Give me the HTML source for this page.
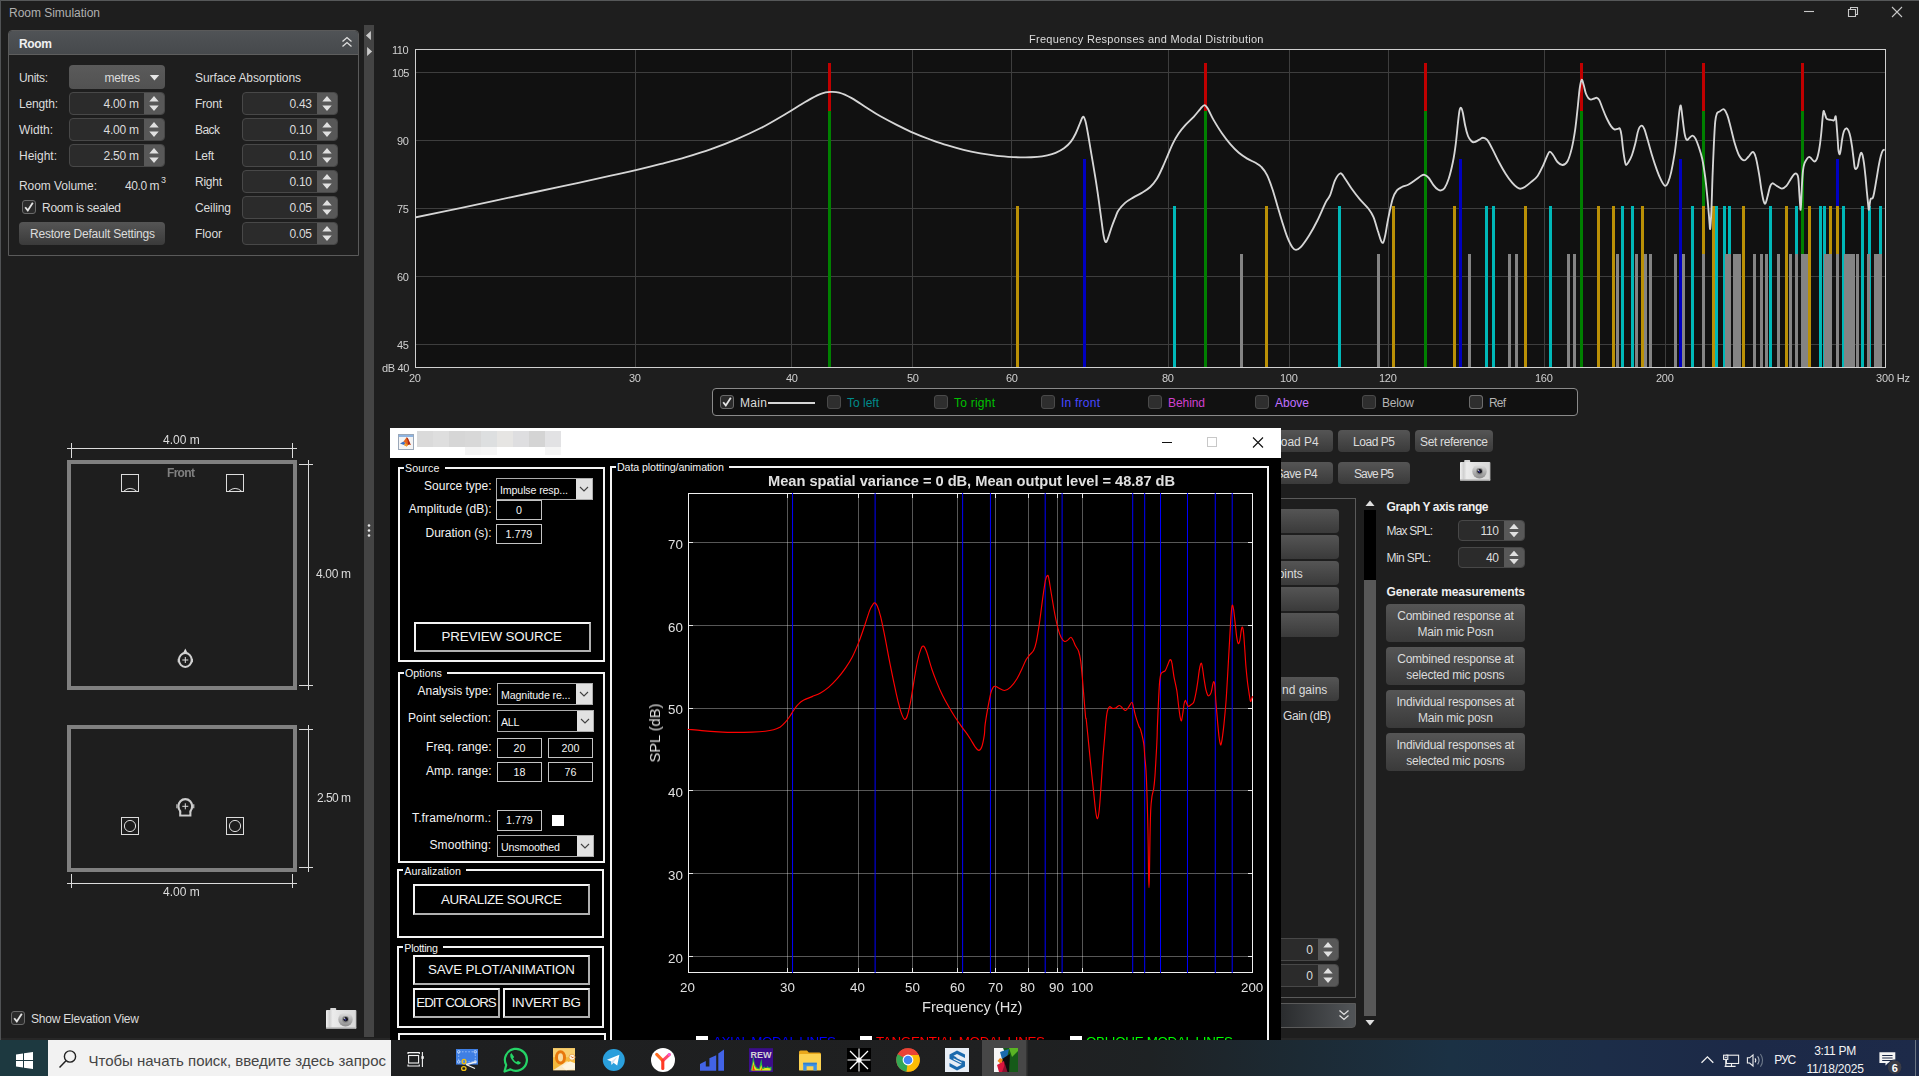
<!DOCTYPE html><html><head><meta charset="utf-8"><title>Room Simulation</title><style>html,body{margin:0;padding:0;background:#1e1e1e;overflow:hidden;}body{width:1919px;height:1076px;position:relative;font-family:"Liberation Sans",sans-serif;}.b{position:absolute;display:block;}.t{position:absolute;white-space:nowrap;display:block;}</style></head><body>
<div class="b" style="left:0px;top:0px;width:1919px;height:1px;background:#565859;"></div>
<div class="b" style="left:0px;top:0px;width:1px;height:1040px;background:#505254;"></div>
<div class="b" style="left:1px;top:1038px;width:1918px;height:2px;background:#272727;"></div>
<span class="t" style="left:9.0px;top:6.3px;font-size:12px;line-height:15px;color:#b0b0b0;letter-spacing:-0.027px;">Room Simulation</span>
<svg class="b" style="left:1795px;top:0px" width="124" height="26"><path d="M9 11.5 H19" stroke="#c8c8c8" stroke-width="1.1"/><path d="M53.5 9.5 h7 v7 h-7 z M55.5 9.5 v-2 h7 v7 h-2" fill="none" stroke="#c8c8c8" stroke-width="1.1"/><path d="M97 7 L107 17 M107 7 L97 17" stroke="#c8c8c8" stroke-width="1.1"/></svg>
<div class="b" style="left:8px;top:30px;width:351px;height:226px;border:1px solid #5a5a5a;box-sizing:border-box;border-radius:4px 4px 0 0;"></div>
<div class="b" style="left:9px;top:31px;width:349px;height:23px;background:linear-gradient(#505356,#46494c);border-radius:3px 3px 0 0;"></div>
<div class="b" style="left:9px;top:54px;width:349px;height:1px;background:#5e5e5e;"></div>
<span class="t" style="left:19.0px;top:36.6px;font-size:12px;line-height:15px;color:#f0f0f0;font-weight:700;letter-spacing:-0.332px;">Room</span>
<svg class="b" style="left:340px;top:35px" width="14" height="14"><path d="M2.5 6.5 L7 2.5 L11.5 6.5 M2.5 11.5 L7 7.5 L11.5 11.5" fill="none" stroke="#e0e0e0" stroke-width="1.3"/></svg>
<span class="t" style="left:19.0px;top:70.7px;font-size:12px;line-height:15px;color:#dcdcdc;letter-spacing:-0.335px;">Units:</span>
<div class="b" style="left:69px;top:65px;width:96px;height:24px;background:linear-gradient(#5a5a5a,#525252);border-radius:4px;"></div>
<span class="t" style="left:104.6px;top:70.7px;font-size:12px;line-height:15px;color:#dcdcdc;letter-spacing:-0.255px;">metres</span>
<svg class="b" style="left:148px;top:73px" width="12" height="9"><path d="M1.8 2 H11.2 L6.5 7.4 Z" fill="#e6e6e6"/></svg>
<span class="t" style="left:19.0px;top:96.7px;font-size:12px;line-height:15px;color:#dcdcdc;letter-spacing:-0.173px;">Length:</span>
<div class="b" style="left:69px;top:92px;width:96px;height:23px;background:#2b2b2b;border:1px solid #484848;border-radius:4px;box-sizing:border-box;"></div>
<div class="b" style="left:144px;top:93px;width:20px;height:21px;background:#585858;border-radius:0 3px 3px 0;"></div>
<svg class="b" style="left:144px;top:92px" width="21" height="23"><path d="M5.3 9.5 L10.0 4.0 L14.7 9.5 Z M5.3 13.5 L10.0 19.0 L14.7 13.5 Z" fill="#e0e0e0"/></svg>
<span class="t" style="left:103.6px;top:97.2px;font-size:12px;line-height:15px;color:#dcdcdc;letter-spacing:-0.250px;">4.00 m</span>
<span class="t" style="left:19.0px;top:122.7px;font-size:12px;line-height:15px;color:#dcdcdc;letter-spacing:-0.002px;">Width:</span>
<div class="b" style="left:69px;top:118px;width:96px;height:23px;background:#2b2b2b;border:1px solid #484848;border-radius:4px;box-sizing:border-box;"></div>
<div class="b" style="left:144px;top:119px;width:20px;height:21px;background:#585858;border-radius:0 3px 3px 0;"></div>
<svg class="b" style="left:144px;top:118px" width="21" height="23"><path d="M5.3 9.5 L10.0 4.0 L14.7 9.5 Z M5.3 13.5 L10.0 19.0 L14.7 13.5 Z" fill="#e0e0e0"/></svg>
<span class="t" style="left:103.6px;top:123.2px;font-size:12px;line-height:15px;color:#dcdcdc;letter-spacing:-0.250px;">4.00 m</span>
<span class="t" style="left:19.0px;top:148.7px;font-size:12px;line-height:15px;color:#dcdcdc;letter-spacing:-0.004px;">Height:</span>
<div class="b" style="left:69px;top:144px;width:96px;height:23px;background:#2b2b2b;border:1px solid #484848;border-radius:4px;box-sizing:border-box;"></div>
<div class="b" style="left:144px;top:145px;width:20px;height:21px;background:#585858;border-radius:0 3px 3px 0;"></div>
<svg class="b" style="left:144px;top:144px" width="21" height="23"><path d="M5.3 9.5 L10.0 4.0 L14.7 9.5 Z M5.3 13.5 L10.0 19.0 L14.7 13.5 Z" fill="#e0e0e0"/></svg>
<span class="t" style="left:103.6px;top:149.2px;font-size:12px;line-height:15px;color:#dcdcdc;letter-spacing:-0.250px;">2.50 m</span>
<span class="t" style="left:195.0px;top:70.7px;font-size:12px;line-height:15px;color:#dcdcdc;letter-spacing:-0.078px;">Surface Absorptions</span>
<span class="t" style="left:195.0px;top:96.7px;font-size:12px;line-height:15px;color:#dcdcdc;letter-spacing:-0.252px;">Front</span>
<div class="b" style="left:242px;top:92px;width:96px;height:23px;background:#2b2b2b;border:1px solid #484848;border-radius:4px;box-sizing:border-box;"></div>
<div class="b" style="left:317px;top:93px;width:20px;height:21px;background:#585858;border-radius:0 3px 3px 0;"></div>
<svg class="b" style="left:317px;top:92px" width="21" height="23"><path d="M5.3 9.5 L10.0 4.0 L14.7 9.5 Z M5.3 13.5 L10.0 19.0 L14.7 13.5 Z" fill="#e0e0e0"/></svg>
<span class="t" style="left:289.4px;top:97.2px;font-size:12px;line-height:15px;color:#dcdcdc;letter-spacing:-0.250px;">0.43</span>
<span class="t" style="left:195.0px;top:122.7px;font-size:12px;line-height:15px;color:#dcdcdc;letter-spacing:-0.559px;">Back</span>
<div class="b" style="left:242px;top:118px;width:96px;height:23px;background:#2b2b2b;border:1px solid #484848;border-radius:4px;box-sizing:border-box;"></div>
<div class="b" style="left:317px;top:119px;width:20px;height:21px;background:#585858;border-radius:0 3px 3px 0;"></div>
<svg class="b" style="left:317px;top:118px" width="21" height="23"><path d="M5.3 9.5 L10.0 4.0 L14.7 9.5 Z M5.3 13.5 L10.0 19.0 L14.7 13.5 Z" fill="#e0e0e0"/></svg>
<span class="t" style="left:289.4px;top:123.2px;font-size:12px;line-height:15px;color:#dcdcdc;letter-spacing:-0.250px;">0.10</span>
<span class="t" style="left:195.0px;top:148.7px;font-size:12px;line-height:15px;color:#dcdcdc;letter-spacing:-0.339px;">Left</span>
<div class="b" style="left:242px;top:144px;width:96px;height:23px;background:#2b2b2b;border:1px solid #484848;border-radius:4px;box-sizing:border-box;"></div>
<div class="b" style="left:317px;top:145px;width:20px;height:21px;background:#585858;border-radius:0 3px 3px 0;"></div>
<svg class="b" style="left:317px;top:144px" width="21" height="23"><path d="M5.3 9.5 L10.0 4.0 L14.7 9.5 Z M5.3 13.5 L10.0 19.0 L14.7 13.5 Z" fill="#e0e0e0"/></svg>
<span class="t" style="left:289.4px;top:149.2px;font-size:12px;line-height:15px;color:#dcdcdc;letter-spacing:-0.250px;">0.10</span>
<span class="t" style="left:195.0px;top:174.7px;font-size:12px;line-height:15px;color:#dcdcdc;letter-spacing:-0.253px;">Right</span>
<div class="b" style="left:242px;top:170px;width:96px;height:23px;background:#2b2b2b;border:1px solid #484848;border-radius:4px;box-sizing:border-box;"></div>
<div class="b" style="left:317px;top:171px;width:20px;height:21px;background:#585858;border-radius:0 3px 3px 0;"></div>
<svg class="b" style="left:317px;top:170px" width="21" height="23"><path d="M5.3 9.5 L10.0 4.0 L14.7 9.5 Z M5.3 13.5 L10.0 19.0 L14.7 13.5 Z" fill="#e0e0e0"/></svg>
<span class="t" style="left:289.4px;top:175.2px;font-size:12px;line-height:15px;color:#dcdcdc;letter-spacing:-0.250px;">0.10</span>
<span class="t" style="left:195.0px;top:200.7px;font-size:12px;line-height:15px;color:#dcdcdc;letter-spacing:-0.114px;">Ceiling</span>
<div class="b" style="left:242px;top:196px;width:96px;height:23px;background:#2b2b2b;border:1px solid #484848;border-radius:4px;box-sizing:border-box;"></div>
<div class="b" style="left:317px;top:197px;width:20px;height:21px;background:#585858;border-radius:0 3px 3px 0;"></div>
<svg class="b" style="left:317px;top:196px" width="21" height="23"><path d="M5.3 9.5 L10.0 4.0 L14.7 9.5 Z M5.3 13.5 L10.0 19.0 L14.7 13.5 Z" fill="#e0e0e0"/></svg>
<span class="t" style="left:289.4px;top:201.2px;font-size:12px;line-height:15px;color:#dcdcdc;letter-spacing:-0.250px;">0.05</span>
<span class="t" style="left:195.0px;top:226.7px;font-size:12px;line-height:15px;color:#dcdcdc;letter-spacing:-0.085px;">Floor</span>
<div class="b" style="left:242px;top:222px;width:96px;height:23px;background:#2b2b2b;border:1px solid #484848;border-radius:4px;box-sizing:border-box;"></div>
<div class="b" style="left:317px;top:223px;width:20px;height:21px;background:#585858;border-radius:0 3px 3px 0;"></div>
<svg class="b" style="left:317px;top:222px" width="21" height="23"><path d="M5.3 9.5 L10.0 4.0 L14.7 9.5 Z M5.3 13.5 L10.0 19.0 L14.7 13.5 Z" fill="#e0e0e0"/></svg>
<span class="t" style="left:289.4px;top:227.2px;font-size:12px;line-height:15px;color:#dcdcdc;letter-spacing:-0.250px;">0.05</span>
<span class="t" style="left:19.0px;top:179.3px;font-size:12px;line-height:15px;color:#dcdcdc;letter-spacing:-0.064px;">Room Volume:</span>
<span class="t" style="left:125.0px;top:179.3px;font-size:12px;line-height:15px;color:#dcdcdc;letter-spacing:-0.417px;">40.0 m</span>
<span class="t" style="left:161.0px;top:174.7px;font-size:9px;line-height:11px;color:#dcdcdc;letter-spacing:-1.505px;">3</span>
<div class="b" style="left:22px;top:200px;width:14px;height:14px;background:#2b2b2b;border:1px solid #6a6a6a;border-radius:3px;box-sizing:border-box;"></div>
<svg class="b" style="left:22px;top:200px" width="14" height="14"><path d="M3.2 7.2 L5.8 10.4 L10.8 2.8" fill="none" stroke="#e6e6e6" stroke-width="1.8"/></svg>
<span class="t" style="left:42.0px;top:200.7px;font-size:12px;line-height:15px;color:#dcdcdc;letter-spacing:-0.285px;">Room is sealed</span>
<div class="b" style="left:19px;top:222px;width:146px;height:23px;background:linear-gradient(#555555,#3a3a3a);border-radius:4px;"></div>
<span class="t" style="left:30.0px;top:226.9px;font-size:12px;line-height:15px;color:#dcdcdc;letter-spacing:-0.220px;">Restore Default Settings</span>
<div class="b" style="left:364px;top:25px;width:10px;height:1012px;background:#444444;"></div>
<svg class="b" style="left:364px;top:28px" width="10" height="30"><path d="M6.9 3 V12 L1.9 7.5 Z M3.1 19 V28 L8.1 23.5 Z" fill="#cacaca"/></svg>
<svg class="b" style="left:366px;top:522px" width="6" height="18"><circle cx="3" cy="3.5" r="1.3" fill="#e8e8e8"/><circle cx="3" cy="8.5" r="1.3" fill="#e8e8e8"/><circle cx="3" cy="13.5" r="1.3" fill="#e8e8e8"/></svg>
<div class="b" style="left:11px;top:1011px;width:14px;height:14px;background:#2b2b2b;border:1px solid #6a6a6a;border-radius:3px;box-sizing:border-box;"></div>
<svg class="b" style="left:11px;top:1011px" width="14" height="14"><path d="M3.2 7.2 L5.8 10.4 L10.8 2.8" fill="none" stroke="#e6e6e6" stroke-width="1.8"/></svg>
<span class="t" style="left:31.0px;top:1011.9px;font-size:12px;line-height:15px;color:#dcdcdc;letter-spacing:-0.214px;">Show Elevation View</span>
<svg class="b" style="left:326px;top:1008px" width="31" height="22" viewBox="0 0 31 22"><defs><linearGradient id="cg1" x1="0" x2="1"><stop offset="0" stop-color="#f0f0f0"/><stop offset="0.12" stop-color="#d0d0d0"/><stop offset="0.22" stop-color="#ececec"/><stop offset="0.5" stop-color="#e2e2e2"/><stop offset="1" stop-color="#d8d8d8"/></linearGradient><linearGradient id="cl1" x1="0" y1="0" x2="0" y2="1"><stop offset="0" stop-color="#e4e4e4"/><stop offset="0.5" stop-color="#b4b4b4"/><stop offset="1" stop-color="#8c8c8c"/></linearGradient></defs><rect x="4.2" y="0" width="6" height="2.6" rx="0.8" fill="#d8d8d8"/><rect x="0" y="2" width="30.2" height="18.6" rx="0.8" fill="url(#cg1)"/><rect x="0" y="19.2" width="30.2" height="1.4" fill="#bcbcbc"/><rect x="29.2" y="2.500" width="1" height="18" fill="#c8c8c8"/><circle cx="19.5" cy="11.4" r="7.2" fill="url(#cl1)"/><circle cx="19.5" cy="11.4" r="3.4" fill="#8a8a8a"/><circle cx="19.7" cy="11.3" r="2.3" fill="#14141c"/><circle cx="19.3" cy="11.600" r="0.9" fill="#3a3aa0"/><circle cx="18.6" cy="10.300" r="0.7" fill="#d0d0d0"/></svg>
<svg class="b" style="left:0px;top:420px" width="364" height="490" shape-rendering="crispEdges"><rect x="69" y="42" width="226" height="226" fill="none" stroke="#808080" stroke-width="4"/><path d="M67 28.5 H297 M71.5 23 V38 M292.5 23 V38" stroke="#dcdcdc" stroke-width="1"/><path d="M308.5 40 V270 M299 44.5 H313 M299 265.5 H313" stroke="#dcdcdc" stroke-width="1"/><rect x="69" y="307" width="226" height="143" fill="none" stroke="#808080" stroke-width="4"/><path d="M308.5 305 V452 M299 309.5 H313 M299 447.5 H313" stroke="#dcdcdc" stroke-width="1"/><path d="M67 463.5 H297 M71.5 454 V468 M292.5 454 V468" stroke="#dcdcdc" stroke-width="1"/><rect x="121.5" y="54.5" width="17" height="17" fill="none" stroke="#dcdcdc" stroke-width="1"/><rect x="226.5" y="54.5" width="17" height="17" fill="none" stroke="#dcdcdc" stroke-width="1"/><rect x="121.5" y="397.5" width="17" height="17" fill="none" stroke="#dcdcdc" stroke-width="1"/><rect x="226.5" y="397.5" width="17" height="17" fill="none" stroke="#dcdcdc" stroke-width="1"/></svg>
<svg class="b" style="left:0px;top:420px" width="364" height="490"><path d="M124 71 Q130 65.80000000000001 136.5 71" fill="none" stroke="#dcdcdc" stroke-width="1"/><circle cx="130" cy="406" r="5.6" fill="none" stroke="#dcdcdc" stroke-width="1"/><path d="M229 71 Q235 65.80000000000001 241.5 71" fill="none" stroke="#dcdcdc" stroke-width="1"/><circle cx="235" cy="406" r="5.6" fill="none" stroke="#dcdcdc" stroke-width="1"/><path d="M185.3 228.5 L187.9 233.7 L182.70000000000002 233.7 Z" fill="#dcdcdc"/><path d="M177.70000000000002 238.8 h1.2 v3.4 h-1.2 z M191.70000000000002 238.8 h1.2 v3.4 h-1.2 z" fill="#dcdcdc"/><ellipse cx="185.3" cy="240" rx="6.4" ry="6.9" fill="none" stroke="#d0d0d0" stroke-width="2"/><path d="M182.3 240 H188.3 M185.3 237 V243" stroke="#dcdcdc" stroke-width="1"/><path d="M180.3 390.29999999999995 V395.29999999999995 H190.3 V390.29999999999995" fill="none" stroke="#cccccc" stroke-width="2.2"/><ellipse cx="185.3" cy="386.29999999999995" rx="6.9" ry="7.2" fill="#1e1e1e" stroke="#cccccc" stroke-width="2.2"/><rect x="181.3" y="390.49999999999994" width="8" height="4" fill="#1e1e1e"/><path d="M176.9 384.29999999999995 v4 M193.70000000000002 384.29999999999995 v4" stroke="#b0b0b0" stroke-width="1.4"/><path d="M182.3 386.29999999999995 H188.3 M185.3 383.29999999999995 V389.29999999999995" stroke="#dcdcdc" stroke-width="1"/></svg>
<span class="t" style="left:163.0px;top:432.7px;font-size:12px;line-height:15px;color:#dcdcdc;letter-spacing:0.000px;will-change:transform;">4.00 m</span>
<span class="t" style="left:316.0px;top:566.7px;font-size:12px;line-height:15px;color:#dcdcdc;letter-spacing:-0.337px;will-change:transform;">4.00 m</span>
<span class="t" style="left:167.3px;top:465.6px;font-size:12px;line-height:15px;color:#808080;font-weight:700;letter-spacing:-0.689px;will-change:transform;">Front</span>
<span class="t" style="left:316.5px;top:790.5px;font-size:12px;line-height:15px;color:#dcdcdc;letter-spacing:-0.537px;will-change:transform;">2.50 m</span>
<span class="t" style="left:163.0px;top:884.5px;font-size:12px;line-height:15px;color:#dcdcdc;letter-spacing:0.000px;will-change:transform;">4.00 m</span>
<svg class="b" style="left:376px;top:30px" width="1543" height="370" shape-rendering="crispEdges"><rect x="39" y="19" width="1471" height="319" fill="#111111"/><path d="M259.5 20 V337M415.5 20 V337M536.5 20 V337M635.5 20 V337M792.5 20 V337M913.5 20 V337M1012.5 20 V337M1168.5 20 V337M1289.5 20 V337M40 42.5 H1509M40 110.5 H1509M40 178.5 H1509M40 246.5 H1509M40 314.5 H1509" stroke="#3e3e3e" stroke-width="1"/><rect x="452" y="33" width="3" height="304" fill="#c00000"/><rect x="828" y="33" width="3" height="304" fill="#c00000"/><rect x="1048" y="33" width="3" height="304" fill="#c00000"/><rect x="1204" y="33" width="3" height="304" fill="#c00000"/><rect x="1326" y="33" width="3" height="304" fill="#c00000"/><rect x="1425" y="33" width="3" height="304" fill="#c00000"/><rect x="452" y="81" width="3" height="256" fill="#008000"/><rect x="828" y="81" width="3" height="256" fill="#008000"/><rect x="1048" y="81" width="3" height="256" fill="#008000"/><rect x="1204" y="81" width="3" height="256" fill="#008000"/><rect x="1326" y="81" width="3" height="256" fill="#008000"/><rect x="1425" y="81" width="3" height="256" fill="#008000"/><rect x="707" y="129" width="3" height="208" fill="#0000c0"/><rect x="1083" y="129" width="3" height="208" fill="#0000c0"/><rect x="1303" y="129" width="3" height="208" fill="#0000c0"/><rect x="1460" y="129" width="3" height="208" fill="#0000c0"/><rect x="640" y="176" width="3" height="161" fill="#ba9006"/><rect x="889" y="176" width="3" height="161" fill="#ba9006"/><rect x="889" y="176" width="3" height="161" fill="#ba9006"/><rect x="1016" y="176" width="3" height="161" fill="#ba9006"/><rect x="1077" y="176" width="3" height="161" fill="#ba9006"/><rect x="1077" y="176" width="3" height="161" fill="#ba9006"/><rect x="1148" y="176" width="3" height="161" fill="#ba9006"/><rect x="1148" y="176" width="3" height="161" fill="#ba9006"/><rect x="1221" y="176" width="3" height="161" fill="#ba9006"/><rect x="1221" y="176" width="3" height="161" fill="#ba9006"/><rect x="1236" y="176" width="3" height="161" fill="#ba9006"/><rect x="1265" y="176" width="3" height="161" fill="#ba9006"/><rect x="1265" y="176" width="3" height="161" fill="#ba9006"/><rect x="1326" y="176" width="3" height="161" fill="#ba9006"/><rect x="1326" y="176" width="3" height="161" fill="#ba9006"/><rect x="1336" y="176" width="3" height="161" fill="#ba9006"/><rect x="1336" y="176" width="3" height="161" fill="#ba9006"/><rect x="1366" y="176" width="3" height="161" fill="#ba9006"/><rect x="1366" y="176" width="3" height="161" fill="#ba9006"/><rect x="1393" y="176" width="3" height="161" fill="#ba9006"/><rect x="1409" y="176" width="3" height="161" fill="#ba9006"/><rect x="1409" y="176" width="3" height="161" fill="#ba9006"/><rect x="1432" y="176" width="3" height="161" fill="#ba9006"/><rect x="1432" y="176" width="3" height="161" fill="#ba9006"/><rect x="1453" y="176" width="3" height="161" fill="#ba9006"/><rect x="1453" y="176" width="3" height="161" fill="#ba9006"/><rect x="1460" y="176" width="3" height="161" fill="#ba9006"/><rect x="1460" y="176" width="3" height="161" fill="#ba9006"/><rect x="1485" y="176" width="3" height="161" fill="#ba9006"/><rect x="1485" y="176" width="3" height="161" fill="#ba9006"/><rect x="797" y="176" width="3" height="161" fill="#00b8b8"/><rect x="797" y="176" width="3" height="161" fill="#00b8b8"/><rect x="962" y="176" width="3" height="161" fill="#00b8b8"/><rect x="962" y="176" width="3" height="161" fill="#00b8b8"/><rect x="1109" y="176" width="3" height="161" fill="#00b8b8"/><rect x="1109" y="176" width="3" height="161" fill="#00b8b8"/><rect x="1116" y="176" width="3" height="161" fill="#00b8b8"/><rect x="1116" y="176" width="3" height="161" fill="#00b8b8"/><rect x="1173" y="176" width="3" height="161" fill="#00b8b8"/><rect x="1173" y="176" width="3" height="161" fill="#00b8b8"/><rect x="1245" y="176" width="3" height="161" fill="#00b8b8"/><rect x="1245" y="176" width="3" height="161" fill="#00b8b8"/><rect x="1255" y="176" width="3" height="161" fill="#00b8b8"/><rect x="1255" y="176" width="3" height="161" fill="#00b8b8"/><rect x="1315" y="176" width="3" height="161" fill="#00b8b8"/><rect x="1315" y="176" width="3" height="161" fill="#00b8b8"/><rect x="1339" y="176" width="3" height="161" fill="#00b8b8"/><rect x="1339" y="176" width="3" height="161" fill="#00b8b8"/><rect x="1347" y="176" width="3" height="161" fill="#00b8b8"/><rect x="1347" y="176" width="3" height="161" fill="#00b8b8"/><rect x="1352" y="176" width="3" height="161" fill="#00b8b8"/><rect x="1352" y="176" width="3" height="161" fill="#00b8b8"/><rect x="1393" y="176" width="3" height="161" fill="#00b8b8"/><rect x="1393" y="176" width="3" height="161" fill="#00b8b8"/><rect x="1419" y="176" width="3" height="161" fill="#00b8b8"/><rect x="1419" y="176" width="3" height="161" fill="#00b8b8"/><rect x="1443" y="176" width="3" height="161" fill="#00b8b8"/><rect x="1443" y="176" width="3" height="161" fill="#00b8b8"/><rect x="1447" y="176" width="3" height="161" fill="#00b8b8"/><rect x="1447" y="176" width="3" height="161" fill="#00b8b8"/><rect x="1466" y="176" width="3" height="161" fill="#00b8b8"/><rect x="1466" y="176" width="3" height="161" fill="#00b8b8"/><rect x="1485" y="176" width="3" height="161" fill="#00b8b8"/><rect x="1485" y="176" width="3" height="161" fill="#00b8b8"/><rect x="1492" y="176" width="3" height="161" fill="#00b8b8"/><rect x="1492" y="176" width="3" height="161" fill="#00b8b8"/><rect x="1503" y="176" width="3" height="161" fill="#00b8b8"/><rect x="1503" y="176" width="3" height="161" fill="#00b8b8"/><rect x="864" y="224" width="3" height="113" fill="#848484"/><rect x="1001" y="224" width="3" height="113" fill="#848484"/><rect x="1001" y="224" width="3" height="113" fill="#848484"/><rect x="1092" y="224" width="3" height="113" fill="#848484"/><rect x="1132" y="224" width="3" height="113" fill="#848484"/><rect x="1139" y="224" width="3" height="113" fill="#848484"/><rect x="1139" y="224" width="3" height="113" fill="#848484"/><rect x="1191" y="224" width="3" height="113" fill="#848484"/><rect x="1191" y="224" width="3" height="113" fill="#848484"/><rect x="1197" y="224" width="3" height="113" fill="#848484"/><rect x="1197" y="224" width="3" height="113" fill="#848484"/><rect x="1240" y="224" width="3" height="113" fill="#848484"/><rect x="1259" y="224" width="3" height="113" fill="#848484"/><rect x="1259" y="224" width="3" height="113" fill="#848484"/><rect x="1268" y="224" width="3" height="113" fill="#848484"/><rect x="1268" y="224" width="3" height="113" fill="#848484"/><rect x="1273" y="224" width="3" height="113" fill="#848484"/><rect x="1298" y="224" width="3" height="113" fill="#848484"/><rect x="1298" y="224" width="3" height="113" fill="#848484"/><rect x="1306" y="224" width="3" height="113" fill="#848484"/><rect x="1306" y="224" width="3" height="113" fill="#848484"/><rect x="1326" y="224" width="3" height="113" fill="#848484"/><rect x="1349" y="224" width="3" height="113" fill="#848484"/><rect x="1349" y="224" width="3" height="113" fill="#848484"/><rect x="1352" y="224" width="3" height="113" fill="#848484"/><rect x="1352" y="224" width="3" height="113" fill="#848484"/><rect x="1357" y="224" width="3" height="113" fill="#848484"/><rect x="1357" y="224" width="3" height="113" fill="#848484"/><rect x="1359" y="224" width="3" height="113" fill="#848484"/><rect x="1362" y="224" width="3" height="113" fill="#848484"/><rect x="1362" y="224" width="3" height="113" fill="#848484"/><rect x="1377" y="224" width="3" height="113" fill="#848484"/><rect x="1377" y="224" width="3" height="113" fill="#848484"/><rect x="1384" y="224" width="3" height="113" fill="#848484"/><rect x="1389" y="224" width="3" height="113" fill="#848484"/><rect x="1389" y="224" width="3" height="113" fill="#848484"/><rect x="1401" y="224" width="3" height="113" fill="#848484"/><rect x="1401" y="224" width="3" height="113" fill="#848484"/><rect x="1413" y="224" width="3" height="113" fill="#848484"/><rect x="1419" y="224" width="3" height="113" fill="#848484"/><rect x="1419" y="224" width="3" height="113" fill="#848484"/><rect x="1425" y="224" width="3" height="113" fill="#848484"/><rect x="1425" y="224" width="3" height="113" fill="#848484"/><rect x="1426" y="224" width="3" height="113" fill="#848484"/><rect x="1426" y="224" width="3" height="113" fill="#848484"/><rect x="1429" y="224" width="3" height="113" fill="#848484"/><rect x="1429" y="224" width="3" height="113" fill="#848484"/><rect x="1448" y="224" width="3" height="113" fill="#848484"/><rect x="1448" y="224" width="3" height="113" fill="#848484"/><rect x="1450" y="224" width="3" height="113" fill="#848484"/><rect x="1450" y="224" width="3" height="113" fill="#848484"/><rect x="1453" y="224" width="3" height="113" fill="#848484"/><rect x="1453" y="224" width="3" height="113" fill="#848484"/><rect x="1460" y="224" width="3" height="113" fill="#848484"/><rect x="1468" y="224" width="3" height="113" fill="#848484"/><rect x="1470" y="224" width="3" height="113" fill="#848484"/><rect x="1470" y="224" width="3" height="113" fill="#848484"/><rect x="1473" y="224" width="3" height="113" fill="#848484"/><rect x="1473" y="224" width="3" height="113" fill="#848484"/><rect x="1473" y="224" width="3" height="113" fill="#848484"/><rect x="1476" y="224" width="3" height="113" fill="#848484"/><rect x="1476" y="224" width="3" height="113" fill="#848484"/><rect x="1480" y="224" width="3" height="113" fill="#848484"/><rect x="1480" y="224" width="3" height="113" fill="#848484"/><rect x="1491" y="224" width="3" height="113" fill="#848484"/><rect x="1491" y="224" width="3" height="113" fill="#848484"/><rect x="1498" y="224" width="3" height="113" fill="#848484"/><rect x="1498" y="224" width="3" height="113" fill="#848484"/><rect x="1500" y="224" width="3" height="113" fill="#848484"/><rect x="1500" y="224" width="3" height="113" fill="#848484"/><rect x="1503" y="224" width="3" height="113" fill="#848484"/><rect x="1503" y="224" width="3" height="113" fill="#848484"/><rect x="39.5" y="19.5" width="1470" height="318" fill="none" stroke="#d0d0d0" stroke-width="1"/></svg>
<svg class="b" style="left:376px;top:30px" width="1543" height="370"><clipPath id="tc"><rect x="40" y="20" width="1469" height="317"/></clipPath><path clip-path="url(#tc)" d="M39.5 187.3C46.9 185.8 68.4 181.4 84.2 178.1C100.0 174.8 117.7 170.9 134.4 167.3C151.1 163.7 167.9 160.3 184.6 156.7C201.3 153.1 222.3 148.4 234.8 145.7C247.3 142.9 251.4 142.2 259.8 140.2C268.1 138.2 276.5 136.1 284.9 133.9C293.3 131.7 301.6 129.6 310.0 127.1C318.4 124.6 326.7 122.1 335.1 119.1C343.5 116.1 351.8 112.9 360.2 109.3C368.6 105.8 376.9 102.1 385.3 97.8C393.7 93.5 403.7 87.4 410.4 83.5C417.1 79.6 421.3 76.7 425.5 74.2C429.7 71.7 432.2 70.2 435.5 68.4C438.8 66.6 442.4 64.7 445.5 63.6C448.6 62.5 451.4 62.1 454.3 61.9C457.2 61.7 459.5 61.6 463.1 62.6C466.7 63.6 471.1 65.6 475.7 68.1C480.3 70.6 486.0 74.7 490.7 77.7C495.4 80.7 499.0 83.2 504.0 86.0C509.0 88.8 515.1 92.0 520.7 94.8C526.3 97.6 531.8 100.5 537.4 102.9C543.0 105.4 548.6 107.5 554.2 109.5C559.8 111.5 565.3 113.5 570.9 115.2C576.5 116.9 582.0 118.5 587.6 119.9C593.2 121.3 598.8 122.4 604.4 123.4C610.0 124.4 615.5 125.2 621.1 125.8C626.7 126.4 633.1 126.8 637.8 127.1C642.5 127.4 645.6 127.4 649.5 127.4C653.4 127.4 657.6 127.2 661.2 126.9C664.8 126.6 668.2 126.0 671.3 125.3C674.4 124.6 676.8 124.0 679.6 122.8C682.4 121.6 685.5 120.0 688.0 118.2C690.5 116.4 692.8 114.4 694.7 111.9C696.7 109.5 698.2 106.6 699.7 103.5C701.2 100.4 702.7 96.3 703.9 93.5C705.1 90.7 706.0 87.2 706.9 86.8C707.8 86.4 708.5 87.9 709.4 91.0C710.3 94.1 711.2 99.5 712.2 105.2C713.2 110.9 714.3 117.8 715.6 125.3C716.9 132.8 718.4 141.5 719.8 150.4C721.2 159.3 722.7 169.9 723.9 178.8C725.2 187.7 726.4 198.4 727.3 203.9C728.2 209.4 728.8 211.1 729.5 211.9C730.2 212.7 730.8 211.4 731.8 208.9C732.8 206.4 734.3 201.0 735.6 197.2C736.9 193.4 738.7 189.1 739.8 186.3C740.9 183.5 740.9 182.7 742.4 180.5C744.0 178.3 746.6 175.1 749.1 172.9C751.6 170.7 754.7 169.1 757.5 167.4C760.3 165.7 763.0 164.6 765.8 162.9C768.6 161.2 771.7 159.4 774.2 157.0C776.7 154.6 778.8 152.0 780.9 148.7C783.0 145.4 784.9 140.9 786.7 137.0C788.5 133.1 790.0 129.2 791.7 125.3C793.4 121.4 795.0 117.2 796.8 113.6C798.6 110.0 800.5 106.6 802.6 103.5C804.7 100.4 806.8 98.0 809.3 95.2C811.8 92.4 815.2 89.5 817.7 86.8C820.2 84.1 822.6 80.8 824.4 78.8C826.2 76.8 827.2 75.1 828.5 75.1C829.8 75.1 830.4 76.3 831.9 78.8C833.4 81.3 835.3 86.0 837.7 90.1C840.1 94.2 843.3 99.5 846.1 103.5C848.9 107.5 851.7 111.2 854.5 114.4C857.3 117.6 860.0 120.4 862.8 122.8C865.6 125.2 868.4 126.9 871.2 128.6C874.0 130.3 877.1 131.4 879.5 132.8C881.9 134.2 883.5 134.9 885.4 137.0C887.4 139.1 889.4 141.7 891.2 145.3C893.0 148.9 894.6 153.7 896.3 158.7C898.0 163.7 899.6 169.8 901.3 175.4C903.0 181.0 904.6 186.9 906.3 192.2C908.0 197.5 909.6 203.0 911.3 207.2C913.0 211.4 914.8 215.1 916.3 217.2C917.8 219.3 918.6 219.8 920.0 219.8C921.4 219.8 922.5 219.6 924.7 217.2C926.9 214.8 930.3 209.9 933.1 205.5C935.9 201.1 938.6 196.1 941.4 190.5C944.2 184.9 947.7 176.3 949.8 172.1C951.9 167.9 952.5 169.0 954.0 165.4C955.5 161.8 957.3 154.1 959.0 150.4C960.7 146.7 962.7 143.6 964.4 143.3C966.1 143.0 967.2 146.1 969.1 148.7C971.0 151.3 973.2 155.2 975.7 158.7C978.2 162.2 981.3 166.2 984.1 169.6C986.9 172.9 990.3 175.9 992.5 178.8C994.7 181.7 996.0 183.5 997.5 187.1C999.0 190.7 1000.5 196.6 1001.7 200.5C1003.0 204.4 1004.1 208.6 1005.0 210.6C1005.9 212.6 1006.5 213.4 1007.2 212.6C1007.9 211.8 1008.3 209.8 1009.2 205.5C1010.1 201.2 1011.2 193.2 1012.5 187.1C1013.8 181.0 1015.3 173.1 1016.7 168.7C1018.1 164.2 1019.4 162.3 1020.9 160.4C1022.4 158.5 1024.0 158.0 1025.9 157.0C1027.9 156.0 1030.4 155.7 1032.6 154.5C1034.8 153.3 1037.2 151.5 1039.3 150.0C1041.4 148.5 1043.7 146.6 1045.2 145.7C1046.7 144.8 1047.2 144.5 1048.5 144.8C1049.8 145.2 1051.2 146.0 1052.7 147.8C1054.2 149.6 1056.2 153.4 1057.7 155.4C1059.2 157.4 1060.7 158.8 1061.9 159.6C1063.1 160.4 1063.6 160.7 1064.7 160.4C1065.8 160.1 1067.3 159.9 1068.6 157.9C1069.9 155.9 1071.3 153.0 1072.7 148.7C1074.1 144.4 1075.7 137.8 1076.9 132.0C1078.1 126.2 1079.0 120.0 1079.8 113.6C1080.6 107.2 1081.3 99.1 1081.9 93.5C1082.5 87.9 1083.0 82.7 1083.6 80.1C1084.2 77.5 1084.7 77.5 1085.3 78.1C1085.9 78.7 1086.4 80.7 1087.0 83.5C1087.6 86.3 1088.3 91.5 1089.1 95.2C1089.9 99.0 1091.0 103.4 1092.0 106.0C1093.0 108.6 1094.3 110.0 1095.3 111.0C1096.3 112.0 1096.9 112.4 1098.2 112.2C1099.5 112.0 1101.4 110.7 1102.9 109.9C1104.4 109.2 1105.6 107.7 1107.0 107.7C1108.4 107.7 1109.7 108.1 1111.2 109.9C1112.7 111.7 1114.2 114.9 1116.2 118.6C1118.2 122.3 1120.7 127.8 1122.9 132.0C1125.1 136.2 1127.4 140.2 1129.6 143.7C1131.8 147.2 1134.3 150.6 1136.3 152.9C1138.2 155.2 1139.9 156.5 1141.3 157.5C1142.7 158.5 1143.5 158.8 1144.7 158.7C1146.0 158.6 1147.1 158.1 1148.8 157.0C1150.5 155.9 1152.6 154.2 1154.7 152.4C1156.8 150.6 1159.3 149.0 1161.4 146.2C1163.5 143.3 1165.5 138.8 1167.2 135.3C1168.9 131.8 1170.3 127.6 1171.4 125.3C1172.5 123.0 1172.9 121.6 1173.9 121.6C1174.9 121.6 1176.0 123.6 1177.3 125.3C1178.6 127.0 1180.0 130.4 1181.5 132.0C1183.0 133.6 1184.8 135.1 1186.5 135.0C1188.2 134.9 1190.0 133.9 1191.5 131.2C1193.0 128.5 1194.4 123.8 1195.7 118.6C1197.0 113.4 1198.1 106.9 1199.1 100.2C1200.1 93.5 1200.8 85.5 1201.6 78.5C1202.4 71.5 1203.0 63.2 1203.7 58.4C1204.4 53.6 1205.0 50.3 1205.7 49.7C1206.4 49.1 1207.0 52.8 1207.7 55.1C1208.4 57.4 1209.1 61.3 1209.9 63.5C1210.7 65.7 1211.6 67.1 1212.4 68.1C1213.2 69.1 1213.9 69.5 1214.9 69.6C1215.9 69.7 1217.3 68.8 1218.3 68.5C1219.3 68.2 1220.0 67.5 1220.8 67.8C1221.6 68.1 1222.3 68.3 1223.3 70.1C1224.3 71.9 1225.3 75.4 1226.6 78.5C1227.8 81.6 1229.4 85.6 1230.8 88.5C1232.2 91.4 1233.7 94.3 1235.0 96.1C1236.3 97.9 1237.3 98.9 1238.4 99.4C1239.5 99.9 1240.8 99.0 1241.7 98.9C1242.6 98.8 1243.3 97.5 1243.9 98.6C1244.5 99.7 1245.0 101.7 1245.5 105.3C1246.0 108.9 1246.6 116.0 1247.2 120.3C1247.8 124.6 1248.4 128.8 1248.9 131.2C1249.4 133.6 1249.5 134.9 1250.1 135.0C1250.7 135.1 1251.6 133.6 1252.6 132.0C1253.6 130.4 1254.8 128.4 1255.9 125.3C1257.0 122.2 1258.2 117.8 1259.3 113.6C1260.4 109.4 1261.2 103.2 1262.3 100.2C1263.3 97.2 1264.6 95.7 1265.6 95.6C1266.6 95.5 1267.5 97.0 1268.5 99.4C1269.5 101.9 1270.5 106.0 1271.8 110.3C1273.0 114.6 1274.5 120.3 1276.0 125.3C1277.5 130.3 1279.5 136.2 1281.0 140.4C1282.5 144.6 1283.9 147.8 1285.2 150.4C1286.5 153.0 1287.9 155.4 1289.0 155.8C1290.1 156.2 1290.9 155.2 1291.9 152.9C1292.9 150.6 1294.1 147.0 1295.2 142.1C1296.3 137.2 1297.6 130.1 1298.6 123.7C1299.6 117.3 1300.3 110.3 1301.1 103.6C1301.8 96.9 1302.5 88.2 1303.1 83.5C1303.7 78.8 1304.2 74.9 1304.8 75.5C1305.3 76.1 1305.8 82.2 1306.4 86.9C1307.0 91.6 1307.9 99.8 1308.6 103.6C1309.3 107.4 1310.0 109.2 1310.8 109.9C1311.6 110.6 1312.6 108.5 1313.6 107.8C1314.5 107.1 1315.5 105.5 1316.5 105.6C1317.5 105.7 1318.5 106.7 1319.5 108.6C1320.5 110.5 1321.7 113.7 1322.8 117.0C1323.9 120.3 1325.1 123.7 1326.2 128.7C1327.3 133.7 1328.3 140.4 1329.2 147.1C1330.1 153.8 1330.8 161.8 1331.5 168.8C1332.2 175.8 1332.8 183.9 1333.2 188.9C1333.7 193.9 1333.8 200.3 1334.2 198.9C1334.6 197.5 1335.0 189.1 1335.4 180.5C1335.8 171.9 1336.1 158.2 1336.5 147.1C1336.9 135.9 1337.5 122.8 1337.9 113.6C1338.4 104.4 1338.7 96.9 1339.2 91.9C1339.7 86.9 1340.2 85.2 1340.9 83.5C1341.7 81.8 1342.5 82.2 1343.7 81.5C1344.9 80.8 1346.6 78.7 1347.9 79.3C1349.2 79.9 1350.2 82.3 1351.3 85.2C1352.4 88.1 1353.3 92.2 1354.6 96.9C1355.8 101.6 1357.4 108.9 1358.8 113.6C1360.2 118.3 1361.5 122.5 1363.0 125.3C1364.5 128.1 1366.5 130.1 1368.0 130.4C1369.5 130.7 1370.8 128.4 1372.2 127.0C1373.7 125.6 1375.5 122.0 1376.7 122.0C1378.0 122.0 1378.7 123.4 1379.7 127.0C1380.8 130.6 1382.0 138.1 1383.0 143.7C1384.0 149.3 1384.7 155.9 1385.5 160.5C1386.3 165.1 1387.0 169.1 1387.7 171.3C1388.4 173.5 1388.8 174.2 1389.4 173.5C1390.0 172.8 1390.7 169.8 1391.4 167.1C1392.2 164.4 1393.1 159.4 1393.9 157.1C1394.7 154.8 1395.3 153.5 1396.4 153.3C1397.5 153.1 1399.1 155.0 1400.7 155.9C1402.3 156.8 1404.3 158.6 1405.9 158.6C1407.5 158.6 1408.9 157.5 1410.4 155.9C1411.9 154.3 1413.5 150.9 1414.8 148.9C1416.1 146.9 1417.5 144.8 1418.5 144.0C1419.5 143.2 1420.2 143.3 1420.8 144.0C1421.4 144.7 1421.9 145.0 1422.3 148.2C1422.7 151.4 1423.0 158.3 1423.3 163.0C1423.6 167.7 1424.0 173.6 1424.2 176.4C1424.4 179.2 1424.4 180.4 1424.6 179.7C1424.8 179.0 1425.0 176.3 1425.2 172.0C1425.4 167.7 1425.7 159.3 1426.0 154.1C1426.3 148.9 1426.6 144.2 1427.0 140.7C1427.4 137.2 1427.8 135.3 1428.5 133.3C1429.2 131.3 1430.4 129.6 1431.2 128.5C1432.0 127.4 1432.7 126.9 1433.4 126.9C1434.1 127.0 1434.8 128.0 1435.6 128.8C1436.4 129.6 1437.4 131.5 1438.3 131.5C1439.2 131.5 1440.1 130.7 1440.9 128.8C1441.7 126.9 1442.4 123.6 1443.1 119.9C1443.8 116.2 1444.4 111.5 1444.9 106.5C1445.5 101.5 1446.0 94.4 1446.4 90.2C1446.8 86.0 1447.1 82.3 1447.5 81.2C1447.9 80.1 1448.2 82.4 1448.7 83.5C1449.2 84.6 1449.7 86.9 1450.2 87.9C1450.8 88.9 1451.2 89.1 1452.0 89.4C1452.8 89.7 1454.0 89.7 1455.0 89.9C1456.0 90.1 1457.1 90.7 1457.7 90.5C1458.3 90.3 1458.4 89.7 1458.7 89.0C1459.0 88.3 1459.4 85.5 1459.7 86.4C1460.0 87.3 1460.3 90.8 1460.6 94.6C1460.9 98.4 1461.4 105.3 1461.7 109.5C1462.0 113.7 1462.1 117.4 1462.4 119.9C1462.7 122.4 1463.2 124.4 1463.6 124.4C1464.0 124.4 1464.3 122.4 1464.7 119.9C1465.1 117.4 1465.6 112.6 1466.1 109.5C1466.6 106.4 1467.2 103.2 1467.9 101.3C1468.6 99.4 1469.4 98.4 1470.2 98.3C1471.0 98.2 1471.8 99.2 1472.5 100.6C1473.2 102.0 1473.7 103.8 1474.3 106.5C1474.9 109.2 1475.5 113.2 1476.1 116.9C1476.6 120.6 1477.1 125.3 1477.6 128.8C1478.0 132.3 1478.3 136.2 1478.8 137.8C1479.2 139.5 1479.8 138.9 1480.3 138.7C1480.8 138.4 1481.3 138.0 1481.8 136.3C1482.3 134.7 1482.7 131.0 1483.2 128.8C1483.7 126.6 1484.5 123.5 1485.0 122.9C1485.5 122.3 1486.0 123.4 1486.5 125.1C1487.0 126.8 1487.5 129.7 1488.0 133.3C1488.5 136.9 1489.0 141.8 1489.5 146.7C1490.0 151.6 1490.5 158.3 1491.0 163.0C1491.5 167.7 1491.9 172.1 1492.2 174.9C1492.5 177.7 1492.6 180.2 1492.9 179.7C1493.2 179.2 1493.7 173.8 1494.0 172.0C1494.3 170.2 1494.4 169.3 1494.8 168.7C1495.2 168.1 1496.0 169.2 1496.6 168.3C1497.1 167.4 1497.5 166.1 1498.1 163.0C1498.7 159.9 1499.7 154.1 1500.4 149.7C1501.2 145.2 1501.9 140.3 1502.6 136.3C1503.3 132.3 1504.1 128.5 1504.8 125.9C1505.5 123.3 1506.0 121.7 1506.7 120.7C1507.4 119.6 1508.5 119.8 1508.8 119.6" fill="none" stroke="#d6d6d6" stroke-width="1.85" stroke-linejoin="round"/></svg>
<span class="t" style="left:1028.5px;top:32.0px;font-size:11px;line-height:14px;color:#dcdcdc;letter-spacing:0.291px;will-change:transform;">Frequency Responses and Modal Distribution</span>
<span class="t" style="left:392.4px;top:43.0px;font-size:11px;line-height:14px;color:#d0d0d0;letter-spacing:-0.450px;will-change:transform;">110</span>
<span class="t" style="left:391.5px;top:65.7px;font-size:11px;line-height:14px;color:#d0d0d0;letter-spacing:-0.450px;will-change:transform;">105</span>
<span class="t" style="left:397.2px;top:133.8px;font-size:11px;line-height:14px;color:#d0d0d0;letter-spacing:-0.450px;will-change:transform;">90</span>
<span class="t" style="left:397.2px;top:202.0px;font-size:11px;line-height:14px;color:#d0d0d0;letter-spacing:-0.450px;will-change:transform;">75</span>
<span class="t" style="left:397.2px;top:270.1px;font-size:11px;line-height:14px;color:#d0d0d0;letter-spacing:-0.450px;will-change:transform;">60</span>
<span class="t" style="left:397.2px;top:338.3px;font-size:11px;line-height:14px;color:#d0d0d0;letter-spacing:-0.450px;will-change:transform;">45</span>
<span class="t" style="left:381.7px;top:361.2px;font-size:11px;line-height:14px;color:#d0d0d0;letter-spacing:-0.350px;will-change:transform;">dB 40</span>
<span class="t" style="left:409.2px;top:371.4px;font-size:11px;line-height:14px;color:#d0d0d0;letter-spacing:-0.300px;will-change:transform;">20</span>
<span class="t" style="left:629.3px;top:371.4px;font-size:11px;line-height:14px;color:#d0d0d0;letter-spacing:-0.300px;will-change:transform;">30</span>
<span class="t" style="left:785.5px;top:371.4px;font-size:11px;line-height:14px;color:#d0d0d0;letter-spacing:-0.300px;will-change:transform;">40</span>
<span class="t" style="left:906.6px;top:371.4px;font-size:11px;line-height:14px;color:#d0d0d0;letter-spacing:-0.300px;will-change:transform;">50</span>
<span class="t" style="left:1005.6px;top:371.4px;font-size:11px;line-height:14px;color:#d0d0d0;letter-spacing:-0.300px;will-change:transform;">60</span>
<span class="t" style="left:1161.7px;top:371.4px;font-size:11px;line-height:14px;color:#d0d0d0;letter-spacing:-0.300px;will-change:transform;">80</span>
<span class="t" style="left:1280.0px;top:371.4px;font-size:11px;line-height:14px;color:#d0d0d0;letter-spacing:-0.300px;will-change:transform;">100</span>
<span class="t" style="left:1378.9px;top:371.4px;font-size:11px;line-height:14px;color:#d0d0d0;letter-spacing:-0.300px;will-change:transform;">120</span>
<span class="t" style="left:1535.1px;top:371.4px;font-size:11px;line-height:14px;color:#d0d0d0;letter-spacing:-0.300px;will-change:transform;">160</span>
<span class="t" style="left:1656.2px;top:371.4px;font-size:11px;line-height:14px;color:#d0d0d0;letter-spacing:-0.300px;will-change:transform;">200</span>
<span class="t" style="left:1876.0px;top:371.4px;font-size:11px;line-height:14px;color:#d0d0d0;letter-spacing:-0.171px;will-change:transform;">300 Hz</span>
<div class="b" style="left:712px;top:388px;width:866px;height:28px;background:#111111;border:1px solid #8a8a8a;border-radius:4px;box-sizing:border-box;"></div>
<div class="b" style="left:720px;top:395px;width:14px;height:14px;background:#2b2b2b;border:1px solid #6a6a6a;border-radius:3px;box-sizing:border-box;"></div>
<svg class="b" style="left:720px;top:395px" width="14" height="14"><path d="M3.2 7.2 L5.8 10.4 L10.8 2.8" fill="none" stroke="#e6e6e6" stroke-width="1.8"/></svg>
<span class="t" style="left:740.0px;top:395.8px;font-size:12px;line-height:15px;color:#dcdcdc;letter-spacing:0.330px;">Main</span>
<div class="b" style="left:827px;top:395px;width:14px;height:14px;background:#2e2e2e;border:1px solid #4a4a4a;border-radius:3px;box-sizing:border-box;"></div>
<span class="t" style="left:847.0px;top:395.8px;font-size:12px;line-height:15px;color:#008c8c;letter-spacing:-0.003px;">To left</span>
<div class="b" style="left:934px;top:395px;width:14px;height:14px;background:#2e2e2e;border:1px solid #4a4a4a;border-radius:3px;box-sizing:border-box;"></div>
<span class="t" style="left:954.0px;top:395.8px;font-size:12px;line-height:15px;color:#00c000;letter-spacing:0.235px;">To right</span>
<div class="b" style="left:1041px;top:395px;width:14px;height:14px;background:#2e2e2e;border:1px solid #4a4a4a;border-radius:3px;box-sizing:border-box;"></div>
<span class="t" style="left:1061.0px;top:395.8px;font-size:12px;line-height:15px;color:#4848ff;letter-spacing:0.235px;">In front</span>
<div class="b" style="left:1148px;top:395px;width:14px;height:14px;background:#2e2e2e;border:1px solid #4a4a4a;border-radius:3px;box-sizing:border-box;"></div>
<span class="t" style="left:1168.0px;top:395.8px;font-size:12px;line-height:15px;color:#d040d0;letter-spacing:-0.073px;">Behind</span>
<div class="b" style="left:1255px;top:395px;width:14px;height:14px;background:#2e2e2e;border:1px solid #4a4a4a;border-radius:3px;box-sizing:border-box;"></div>
<span class="t" style="left:1275.0px;top:395.8px;font-size:12px;line-height:15px;color:#c070ff;letter-spacing:-0.006px;">Above</span>
<div class="b" style="left:1362px;top:395px;width:14px;height:14px;background:#2e2e2e;border:1px solid #4a4a4a;border-radius:3px;box-sizing:border-box;"></div>
<span class="t" style="left:1382.0px;top:395.8px;font-size:12px;line-height:15px;color:#b4b4b4;letter-spacing:-0.171px;">Below</span>
<div class="b" style="left:1469px;top:395px;width:14px;height:14px;background:#2e2e2e;border:1px solid #4a4a4a;border-radius:3px;box-sizing:border-box;"></div>
<div class="b" style="left:1469px;top:395px;width:14px;height:14px;border:1px solid #6c6c6c;border-radius:3px;box-sizing:border-box;"></div>
<span class="t" style="left:1489.0px;top:395.8px;font-size:12px;line-height:15px;color:#b4b4b4;letter-spacing:-0.837px;">Ref</span>
<div class="b" style="left:768px;top:402px;width:47px;height:2px;background:#d6d6d6;"></div>
<div class="b" style="left:1265px;top:430px;width:68px;height:22px;background:linear-gradient(#555555,#3a3a3a);border-radius:4px;"></div>
<span class="t" style="left:1274.2px;top:434.9px;font-size:12px;line-height:15px;color:#dcdcdc;letter-spacing:-0.051px;">Load P4</span>
<div class="b" style="left:1338px;top:430px;width:72px;height:22px;background:linear-gradient(#555555,#3a3a3a);border-radius:4px;"></div>
<span class="t" style="left:1353.0px;top:434.9px;font-size:12px;line-height:15px;color:#dcdcdc;letter-spacing:-0.451px;">Load P5</span>
<div class="b" style="left:1415px;top:430px;width:78px;height:22px;background:linear-gradient(#555555,#3a3a3a);border-radius:4px;"></div>
<span class="t" style="left:1420.0px;top:434.9px;font-size:12px;line-height:15px;color:#dcdcdc;letter-spacing:-0.337px;">Set reference</span>
<div class="b" style="left:1265px;top:462px;width:68px;height:22px;background:linear-gradient(#555555,#3a3a3a);border-radius:4px;"></div>
<span class="t" style="left:1275.6px;top:466.9px;font-size:12px;line-height:15px;color:#dcdcdc;letter-spacing:-0.527px;">Save P4</span>
<div class="b" style="left:1338px;top:462px;width:72px;height:22px;background:linear-gradient(#555555,#3a3a3a);border-radius:4px;"></div>
<span class="t" style="left:1354.0px;top:466.9px;font-size:12px;line-height:15px;color:#dcdcdc;letter-spacing:-0.894px;">Save P5</span>
<svg class="b" style="left:1460px;top:460px" width="31" height="22" viewBox="0 0 31 22"><defs><linearGradient id="cg2" x1="0" x2="1"><stop offset="0" stop-color="#f0f0f0"/><stop offset="0.12" stop-color="#d0d0d0"/><stop offset="0.22" stop-color="#ececec"/><stop offset="0.5" stop-color="#e2e2e2"/><stop offset="1" stop-color="#d8d8d8"/></linearGradient><linearGradient id="cl2" x1="0" y1="0" x2="0" y2="1"><stop offset="0" stop-color="#e4e4e4"/><stop offset="0.5" stop-color="#b4b4b4"/><stop offset="1" stop-color="#8c8c8c"/></linearGradient></defs><rect x="4.2" y="0" width="6" height="2.6" rx="0.8" fill="#d8d8d8"/><rect x="0" y="2" width="30.2" height="18.6" rx="0.8" fill="url(#cg2)"/><rect x="0" y="19.2" width="30.2" height="1.4" fill="#bcbcbc"/><rect x="29.2" y="2.500" width="1" height="18" fill="#c8c8c8"/><circle cx="19.5" cy="11.4" r="7.2" fill="url(#cl2)"/><circle cx="19.5" cy="11.4" r="3.4" fill="#8a8a8a"/><circle cx="19.7" cy="11.3" r="2.3" fill="#14141c"/><circle cx="19.3" cy="11.600" r="0.9" fill="#3a3aa0"/><circle cx="18.6" cy="10.300" r="0.7" fill="#d0d0d0"/></svg>
<div class="b" style="left:1200px;top:498px;width:156px;height:500px;border:1px solid #5a5a5a;box-sizing:border-box;"></div>
<div class="b" style="left:1200px;top:509px;width:139px;height:24px;background:linear-gradient(#555555,#3a3a3a);border-radius:4px;"></div>
<div class="b" style="left:1200px;top:535px;width:139px;height:24px;background:linear-gradient(#555555,#3a3a3a);border-radius:4px;"></div>
<div class="b" style="left:1200px;top:561px;width:139px;height:24px;background:linear-gradient(#555555,#3a3a3a);border-radius:4px;"></div>
<div class="b" style="left:1200px;top:587px;width:139px;height:24px;background:linear-gradient(#555555,#3a3a3a);border-radius:4px;"></div>
<div class="b" style="left:1200px;top:613px;width:139px;height:24px;background:linear-gradient(#555555,#3a3a3a);border-radius:4px;"></div>
<div class="b" style="left:1200px;top:677px;width:139px;height:24px;background:linear-gradient(#555555,#3a3a3a);border-radius:4px;"></div>
<span class="t" style="left:1271.2px;top:566.6px;font-size:12px;line-height:15px;color:#dcdcdc;letter-spacing:-0.100px;">points</span>
<span class="t" style="left:1282.0px;top:682.8px;font-size:12px;line-height:15px;color:#dcdcdc;letter-spacing:-0.010px;">nd gains</span>
<span class="t" style="left:1283.0px;top:708.8px;font-size:12px;line-height:15px;color:#dcdcdc;letter-spacing:-0.419px;">Gain (dB)</span>
<div class="b" style="left:1243px;top:938px;width:96px;height:23px;background:#2b2b2b;border:1px solid #484848;border-radius:4px;box-sizing:border-box;"></div>
<div class="b" style="left:1318px;top:939px;width:20px;height:21px;background:#585858;border-radius:0 3px 3px 0;"></div>
<svg class="b" style="left:1318px;top:938px" width="21" height="23"><path d="M5.3 9.5 L10.0 4.0 L14.7 9.5 Z M5.3 13.5 L10.0 19.0 L14.7 13.5 Z" fill="#e0e0e0"/></svg>
<span class="t" style="left:1306.3px;top:943.2px;font-size:12px;line-height:15px;color:#dcdcdc;letter-spacing:-0.250px;">0</span>
<div class="b" style="left:1243px;top:964px;width:96px;height:23px;background:#2b2b2b;border:1px solid #484848;border-radius:4px;box-sizing:border-box;"></div>
<div class="b" style="left:1318px;top:965px;width:20px;height:21px;background:#585858;border-radius:0 3px 3px 0;"></div>
<svg class="b" style="left:1318px;top:964px" width="21" height="23"><path d="M5.3 9.5 L10.0 4.0 L14.7 9.5 Z M5.3 13.5 L10.0 19.0 L14.7 13.5 Z" fill="#e0e0e0"/></svg>
<span class="t" style="left:1306.3px;top:969.2px;font-size:12px;line-height:15px;color:#dcdcdc;letter-spacing:-0.250px;">0</span>
<div class="b" style="left:1200px;top:1003px;width:156px;height:25px;background:linear-gradient(90deg,#2a2c2e 0px,#2a2c2e 80px,#505356 150px);border:1px solid #5a5a5a;box-sizing:border-box;border-radius:0 0 4px 4px;"></div>
<svg class="b" style="left:1337px;top:1008px" width="14" height="14"><path d="M2.5 2.5 L7 6.5 L11.5 2.5 M2.5 7.5 L7 11.5 L11.5 7.5" fill="none" stroke="#e0e0e0" stroke-width="1.3"/></svg>
<div class="b" style="left:1364px;top:510px;width:12px;height:506px;background:#585858;"></div>
<div class="b" style="left:1364px;top:510px;width:12px;height:70px;background:#000000;"></div>
<svg class="b" style="left:1364px;top:499px" width="12" height="8"><path d="M1.5 7 L6 1.5 L10.5 7 Z" fill="#e0e0e0"/></svg>
<svg class="b" style="left:1364px;top:1019px" width="12" height="8"><path d="M1.5 1 L6 6.5 L10.5 1 Z" fill="#e0e0e0"/></svg>
<span class="t" style="left:1386.5px;top:500.0px;font-size:12px;line-height:15px;color:#f0f0f0;font-weight:700;letter-spacing:-0.408px;">Graph Y axis range</span>
<span class="t" style="left:1386.5px;top:524.3px;font-size:12px;line-height:15px;color:#dcdcdc;letter-spacing:-0.789px;">Max SPL:</span>
<div class="b" style="left:1458px;top:520px;width:67px;height:21px;background:#2b2b2b;border:1px solid #484848;border-radius:4px;box-sizing:border-box;"></div>
<div class="b" style="left:1504px;top:521px;width:20px;height:19px;background:#585858;border-radius:0 3px 3px 0;"></div>
<svg class="b" style="left:1504px;top:520px" width="21" height="21"><path d="M5.3 9.0 L10.0 3.8 L14.7 9.0 Z M5.3 12.0 L10.0 17.2 L14.7 12.0 Z" fill="#e0e0e0"/></svg>
<span class="t" style="left:1480.4px;top:524.2px;font-size:12px;line-height:15px;color:#dcdcdc;letter-spacing:-0.250px;">110</span>
<span class="t" style="left:1386.5px;top:551.3px;font-size:12px;line-height:15px;color:#dcdcdc;letter-spacing:-0.598px;">Min SPL:</span>
<div class="b" style="left:1458px;top:547px;width:67px;height:21px;background:#2b2b2b;border:1px solid #484848;border-radius:4px;box-sizing:border-box;"></div>
<div class="b" style="left:1504px;top:548px;width:20px;height:19px;background:#585858;border-radius:0 3px 3px 0;"></div>
<svg class="b" style="left:1504px;top:547px" width="21" height="21"><path d="M5.3 9.0 L10.0 3.8 L14.7 9.0 Z M5.3 12.0 L10.0 17.2 L14.7 12.0 Z" fill="#e0e0e0"/></svg>
<span class="t" style="left:1485.9px;top:551.2px;font-size:12px;line-height:15px;color:#dcdcdc;letter-spacing:-0.250px;">40</span>
<span class="t" style="left:1386.5px;top:585.0px;font-size:12px;line-height:15px;color:#f0f0f0;font-weight:700;letter-spacing:-0.078px;">Generate measurements</span>
<div class="b" style="left:1386px;top:604px;width:139px;height:38px;background:linear-gradient(#555555,#3a3a3a);border-radius:4px;"></div>
<span class="t" style="left:1397.2px;top:609.1px;font-size:12px;line-height:15px;color:#dcdcdc;letter-spacing:-0.220px;">Combined response at</span>
<span class="t" style="left:1417.5px;top:625.1px;font-size:12px;line-height:15px;color:#dcdcdc;letter-spacing:-0.220px;">Main mic Posn</span>
<div class="b" style="left:1386px;top:647px;width:139px;height:38px;background:linear-gradient(#555555,#3a3a3a);border-radius:4px;"></div>
<span class="t" style="left:1397.2px;top:652.1px;font-size:12px;line-height:15px;color:#dcdcdc;letter-spacing:-0.220px;">Combined response at</span>
<span class="t" style="left:1406.3px;top:668.1px;font-size:12px;line-height:15px;color:#dcdcdc;letter-spacing:-0.220px;">selected mic posns</span>
<div class="b" style="left:1386px;top:690px;width:139px;height:38px;background:linear-gradient(#555555,#3a3a3a);border-radius:4px;"></div>
<span class="t" style="left:1396.5px;top:695.1px;font-size:12px;line-height:15px;color:#dcdcdc;letter-spacing:-0.220px;">Individual responses at</span>
<span class="t" style="left:1418.1px;top:711.1px;font-size:12px;line-height:15px;color:#dcdcdc;letter-spacing:-0.220px;">Main mic posn</span>
<div class="b" style="left:1386px;top:733px;width:139px;height:38px;background:linear-gradient(#555555,#3a3a3a);border-radius:4px;"></div>
<span class="t" style="left:1396.5px;top:738.1px;font-size:12px;line-height:15px;color:#dcdcdc;letter-spacing:-0.220px;">Individual responses at</span>
<span class="t" style="left:1406.3px;top:754.1px;font-size:12px;line-height:15px;color:#dcdcdc;letter-spacing:-0.220px;">selected mic posns</span>
<div class="b" style="left:390px;top:428px;width:891px;height:612px;overflow:hidden;background:#000;">
<div class="b" style="left:-390px;top:-428px;width:1919px;height:1076px;">
<div class="b" style="left:390px;top:428px;width:891px;height:30px;background:#ffffff;"></div>
<svg class="b" style="left:398px;top:434px" width="16" height="16" viewBox="0 0 16 16"><rect x="0.5" y="0.5" width="15" height="15" fill="#f4f4f4" stroke="#9aa7b8" stroke-width="1"/><rect x="1" y="1" width="14" height="2" fill="#8fb4e0"/><path d="M2 9.5 L5.5 7.5 L7.5 9 L6 11 Z" fill="#3b6fc4"/><path d="M5.5 7.5 L8.5 3.5 Q9.5 3 10.2 5 L12.8 11 Q11 9.8 9.8 11.2 L8.6 12.6 L6 11 L7.5 9 Z" fill="#e2641e"/><path d="M8.5 3.5 Q9.5 3 10.2 5 L12.8 11 Q11.2 9.6 10 11 Q10 6 8.5 3.5Z" fill="#a8261a"/><path d="M6 11 L8.6 12.6 L9.8 11.2 Q8 10 7.5 9 Z" fill="#f0a030"/></svg>
<div class="b" style="left:417px;top:431px;width:16px;height:16px;background:#dadada;"></div>
<div class="b" style="left:433px;top:431px;width:16px;height:16px;background:#dedede;"></div>
<div class="b" style="left:449px;top:431px;width:16px;height:16px;background:#d6d6d6;"></div>
<div class="b" style="left:465px;top:431px;width:16px;height:16px;background:#d8d8d8;"></div>
<div class="b" style="left:481px;top:431px;width:16px;height:16px;background:#dddfe0;"></div>
<div class="b" style="left:497px;top:431px;width:16px;height:16px;background:#e6e5e3;"></div>
<div class="b" style="left:513px;top:431px;width:16px;height:16px;background:#dedee0;"></div>
<div class="b" style="left:529px;top:431px;width:16px;height:16px;background:#d4d4d4;"></div>
<div class="b" style="left:545px;top:431px;width:16px;height:16px;background:#e2e2e4;"></div>
<div class="b" style="left:465px;top:447px;width:16px;height:8px;background:#f4f4f4;"></div>
<div class="b" style="left:481px;top:447px;width:16px;height:8px;background:#f6f6f6;"></div>
<div class="b" style="left:545px;top:447px;width:16px;height:8px;background:#f5f5f5;"></div>
<svg class="b" style="left:1150px;top:428px" width="130" height="30"><path d="M12 14.5 H22" stroke="#111" stroke-width="1"/><rect x="57.5" y="9.5" width="9" height="9" fill="none" stroke="#c8c8c8" stroke-width="1"/><path d="M103 9.5 L113 19.5 M113 9.5 L103 19.5" stroke="#111" stroke-width="1.1"/></svg>
<div class="b" style="left:398px;top:467px;width:207px;height:195px;border:2px solid #f4f4f4;box-sizing:border-box;"></div>
<div class="b" style="left:403.5px;top:467px;width:41.0px;height:2px;background:#000;"></div>
<span class="t" style="left:405.0px;top:461.8px;font-size:10.67px;line-height:13px;color:#f4f4f4;letter-spacing:0.138px;">Source</span>
<span class="t" style="left:424.1px;top:478.9px;font-size:12px;line-height:15px;color:#f4f4f4;letter-spacing:0.000px;">Source type:</span>
<div class="b" style="left:496px;top:478px;width:97px;height:22px;background:#000;border:1px solid #adadad;box-sizing:border-box;"></div>
<div class="b" style="left:576px;top:479px;width:16px;height:20px;background:#e1e1e1;"></div>
<svg class="b" style="left:576px;top:478px" width="16" height="22"><path d="M4 9.0 L8 13.0 L12 9.0" fill="none" stroke="#404040" stroke-width="1.1"/></svg>
<span class="t" style="left:500.0px;top:484.2px;font-size:10.67px;line-height:13px;color:#f4f4f4;letter-spacing:-0.141px;">Impulse resp...</span>
<span class="t" style="left:408.8px;top:501.8px;font-size:12px;line-height:15px;color:#f4f4f4;letter-spacing:0.000px;">Amplitude (dB):</span>
<div class="b" style="left:496px;top:500px;width:46px;height:20px;background:#000;border:1px solid #c4c4c4;box-sizing:border-box;"></div>
<span class="t" style="left:516.0px;top:503.8px;font-size:10.67px;line-height:13px;color:#f4f4f4;letter-spacing:0.000px;">0</span>
<span class="t" style="left:425.5px;top:525.8px;font-size:12px;line-height:15px;color:#f4f4f4;letter-spacing:0.000px;">Duration (s):</span>
<div class="b" style="left:496px;top:524px;width:46px;height:20px;background:#000;border:1px solid #c4c4c4;box-sizing:border-box;"></div>
<span class="t" style="left:505.6px;top:527.8px;font-size:10.67px;line-height:13px;color:#f4f4f4;letter-spacing:0.000px;">1.779</span>
<div class="b" style="left:414px;top:622px;width:177px;height:30px;background:#000;border:2px solid #f4f4f4;border-right-color:#b0b0b0;border-bottom-color:#b0b0b0;box-sizing:border-box;"></div>
<span class="t" style="left:441.5px;top:627.9px;font-size:13.33px;line-height:17px;color:#f4f4f4;letter-spacing:-0.132px;">PREVIEW SOURCE</span>
<div class="b" style="left:398px;top:672px;width:207px;height:191px;border:2px solid #f4f4f4;box-sizing:border-box;"></div>
<div class="b" style="left:403.5px;top:672px;width:43.5px;height:2px;background:#000;"></div>
<span class="t" style="left:405.0px;top:666.8px;font-size:10.67px;line-height:13px;color:#f4f4f4;letter-spacing:0.038px;">Options</span>
<span class="t" style="left:417.5px;top:684.3px;font-size:12px;line-height:15px;color:#f4f4f4;letter-spacing:0.000px;">Analysis type:</span>
<div class="b" style="left:497px;top:683px;width:96px;height:22px;background:#000;border:1px solid #adadad;box-sizing:border-box;"></div>
<div class="b" style="left:576px;top:684px;width:16px;height:20px;background:#e1e1e1;"></div>
<svg class="b" style="left:576px;top:683px" width="16" height="22"><path d="M4 9.0 L8 13.0 L12 9.0" fill="none" stroke="#404040" stroke-width="1.1"/></svg>
<span class="t" style="left:501.0px;top:689.2px;font-size:10.67px;line-height:13px;color:#f4f4f4;letter-spacing:-0.120px;">Magnitude re...</span>
<span class="t" style="left:408.0px;top:711.3px;font-size:12px;line-height:15px;color:#f4f4f4;letter-spacing:0.121px;">Point selection:</span>
<div class="b" style="left:497px;top:710px;width:97px;height:22px;background:#000;border:1px solid #adadad;box-sizing:border-box;"></div>
<div class="b" style="left:577px;top:711px;width:16px;height:20px;background:#e1e1e1;"></div>
<svg class="b" style="left:577px;top:710px" width="16" height="22"><path d="M4 9.0 L8 13.0 L12 9.0" fill="none" stroke="#404040" stroke-width="1.1"/></svg>
<span class="t" style="left:501.0px;top:716.2px;font-size:10.67px;line-height:13px;color:#f4f4f4;letter-spacing:-0.243px;">ALL</span>
<span class="t" style="left:426.1px;top:740.3px;font-size:12px;line-height:15px;color:#f4f4f4;letter-spacing:0.000px;">Freq. range:</span>
<div class="b" style="left:497px;top:738px;width:45px;height:20px;background:#000;border:1px solid #c4c4c4;box-sizing:border-box;"></div>
<span class="t" style="left:513.6px;top:741.8px;font-size:10.67px;line-height:13px;color:#f4f4f4;letter-spacing:0.000px;">20</span>
<div class="b" style="left:548px;top:738px;width:45px;height:20px;background:#000;border:1px solid #c4c4c4;box-sizing:border-box;"></div>
<span class="t" style="left:561.6px;top:741.8px;font-size:10.67px;line-height:13px;color:#f4f4f4;letter-spacing:0.000px;">200</span>
<span class="t" style="left:426.1px;top:764.1px;font-size:12px;line-height:15px;color:#f4f4f4;letter-spacing:0.000px;">Amp. range:</span>
<div class="b" style="left:497px;top:762px;width:45px;height:20px;background:#000;border:1px solid #c4c4c4;box-sizing:border-box;"></div>
<span class="t" style="left:513.6px;top:765.8px;font-size:10.67px;line-height:13px;color:#f4f4f4;letter-spacing:0.000px;">18</span>
<div class="b" style="left:548px;top:762px;width:45px;height:20px;background:#000;border:1px solid #c4c4c4;box-sizing:border-box;"></div>
<span class="t" style="left:564.6px;top:765.8px;font-size:10.67px;line-height:13px;color:#f4f4f4;letter-spacing:0.000px;">76</span>
<span class="t" style="left:412.0px;top:810.6px;font-size:12px;line-height:15px;color:#f4f4f4;letter-spacing:0.142px;">T.frame/norm.:</span>
<div class="b" style="left:497px;top:810px;width:45px;height:21px;background:#000;border:1px solid #c4c4c4;box-sizing:border-box;"></div>
<span class="t" style="left:506.1px;top:814.3px;font-size:10.67px;line-height:13px;color:#f4f4f4;letter-spacing:0.000px;">1.779</span>
<div class="b" style="left:552px;top:815px;width:12px;height:11px;background:#ffffff;"></div>
<span class="t" style="left:429.5px;top:837.7px;font-size:12px;line-height:15px;color:#f4f4f4;letter-spacing:0.111px;">Smoothing:</span>
<div class="b" style="left:497px;top:835px;width:97px;height:22px;background:#000;border:1px solid #adadad;box-sizing:border-box;"></div>
<div class="b" style="left:577px;top:836px;width:16px;height:20px;background:#e1e1e1;"></div>
<svg class="b" style="left:577px;top:835px" width="16" height="22"><path d="M4 9.0 L8 13.0 L12 9.0" fill="none" stroke="#404040" stroke-width="1.1"/></svg>
<span class="t" style="left:501.0px;top:841.2px;font-size:10.67px;line-height:13px;color:#f4f4f4;letter-spacing:-0.166px;">Unsmoothed</span>
<div class="b" style="left:397px;top:869px;width:207px;height:69px;border:2px solid #f4f4f4;box-sizing:border-box;"></div>
<div class="b" style="left:402.8px;top:869px;width:63.19999999999999px;height:2px;background:#000;"></div>
<span class="t" style="left:404.3px;top:864.8px;font-size:10.67px;line-height:13px;color:#f4f4f4;letter-spacing:0.086px;">Auralization</span>
<div class="b" style="left:413px;top:884px;width:177px;height:31px;background:#000;border:2px solid #f4f4f4;border-right-color:#b0b0b0;border-bottom-color:#b0b0b0;box-sizing:border-box;"></div>
<span class="t" style="left:441.0px;top:891.1px;font-size:13.33px;line-height:17px;color:#f4f4f4;letter-spacing:-0.351px;">AURALIZE SOURCE</span>
<div class="b" style="left:397px;top:946px;width:207px;height:82px;border:2px solid #f4f4f4;box-sizing:border-box;"></div>
<div class="b" style="left:402.8px;top:946px;width:40.19999999999999px;height:2px;background:#000;"></div>
<span class="t" style="left:404.3px;top:941.8px;font-size:10.67px;line-height:13px;color:#f4f4f4;letter-spacing:-0.270px;">Plotting</span>
<div class="b" style="left:413px;top:955px;width:177px;height:30px;background:#000;border:2px solid #f4f4f4;border-right-color:#b0b0b0;border-bottom-color:#b0b0b0;box-sizing:border-box;"></div>
<span class="t" style="left:428.0px;top:960.9px;font-size:13.33px;line-height:17px;color:#f4f4f4;letter-spacing:-0.170px;">SAVE PLOT/ANIMATION</span>
<div class="b" style="left:413px;top:988px;width:87px;height:30px;background:#000;border:2px solid #f4f4f4;border-right-color:#b0b0b0;border-bottom-color:#b0b0b0;box-sizing:border-box;"></div>
<span class="t" style="left:416.3px;top:994.2px;font-size:13.33px;line-height:17px;color:#f4f4f4;letter-spacing:-0.972px;">EDIT COLORS</span>
<div class="b" style="left:503px;top:988px;width:87px;height:30px;background:#000;border:2px solid #f4f4f4;border-right-color:#b0b0b0;border-bottom-color:#b0b0b0;box-sizing:border-box;"></div>
<span class="t" style="left:511.7px;top:994.2px;font-size:13.33px;line-height:17px;color:#f4f4f4;letter-spacing:-0.270px;">INVERT BG</span>
<div class="b" style="left:398px;top:1033px;width:208px;height:40px;border:2px solid #f4f4f4;box-sizing:border-box;"></div>
<div class="b" style="left:610px;top:466px;width:659px;height:600px;border:2px solid #f4f4f4;box-sizing:border-box;"></div>
<div class="b" style="left:615.5px;top:466px;width:113.5px;height:2px;background:#000;"></div>
<span class="t" style="left:617.0px;top:460.8px;font-size:10.67px;line-height:13px;color:#f4f4f4;letter-spacing:-0.097px;">Data plotting/animation</span>
<span class="t" style="left:767.5px;top:471.9px;font-size:14.67px;line-height:18px;color:#e0e0e0;font-weight:700;letter-spacing:-0.031px;will-change:transform;">Mean spatial variance = 0 dB, Mean output level = 48.87 dB</span>
<svg class="b" style="left:660px;top:480px" width="620" height="520" shape-rendering="crispEdges"><path d="M127.5 14 V492M198.5 14 V492M252.5 14 V492M297.5 14 V492M335.5 14 V492M368.5 14 V492M397.5 14 V492M422.5 14 V492" stroke="rgba(255,255,255,0.34)" stroke-width="1"/><path d="M29 62.5 H592M29 145.5 H592M29 228.5 H592M29 310.5 H592M29 393.5 H592M29 476.5 H592" stroke="rgba(255,255,255,0.34)" stroke-width="1"/><path d="M127.5 14 V18 M127.5 488 V492M198.5 14 V18 M198.5 488 V492M252.5 14 V18 M252.5 488 V492M297.5 14 V18 M297.5 488 V492M335.5 14 V18 M335.5 488 V492M368.5 14 V18 M368.5 488 V492M397.5 14 V18 M397.5 488 V492M422.5 14 V18 M422.5 488 V492M29 62.5 H33 M588 62.5 H592M29 145.5 H33 M588 145.5 H592M29 228.5 H33 M588 228.5 H592M29 310.5 H33 M588 310.5 H592M29 393.5 H33 M588 393.5 H592M29 476.5 H33 M588 476.5 H592" stroke="#e8e8e8" stroke-width="1"/><rect x="28.5" y="13.5" width="564" height="479" fill="none" stroke="#f0f0f0" stroke-width="1"/></svg>
<svg class="b" style="left:660px;top:480px" width="620" height="520"><path d="M132.55 13 V493M302.63 13 V493M402.12 13 V493M472.71 13 V493M527.47 13 V493M572.21 13 V493M215.11 13 V493M385.20 13 V493M484.69 13 V493M555.28 13 V493M330.44 13 V493M500.52 13 V493" stroke="#0000ff" stroke-width="1"/><path d="M27.5 249.2C29.9 249.4 36.5 250.2 41.7 250.6C46.9 251.1 52.9 251.6 58.5 251.9C64.1 252.2 69.6 252.4 75.2 252.4C80.8 252.4 86.9 252.3 91.9 252.1C96.9 251.9 101.7 251.6 105.3 251.2C108.9 250.8 111.1 250.4 113.6 249.7C116.1 249.0 118.3 248.1 120.3 246.9C122.3 245.6 123.7 244.1 125.4 242.2C127.1 240.3 128.9 237.7 130.4 235.5C131.9 233.3 133.2 230.7 134.6 228.8C136.0 226.8 137.2 225.2 138.7 223.8C140.2 222.3 141.6 221.3 143.8 220.1C146.0 218.9 149.3 217.8 152.1 216.6C154.9 215.4 157.7 214.5 160.5 212.9C163.3 211.3 166.0 209.5 168.8 207.1C171.6 204.7 174.4 201.9 177.2 198.7C180.0 195.5 183.1 191.4 185.6 187.8C188.1 184.2 190.1 181.3 192.3 177.0C194.5 172.7 196.8 167.2 198.9 161.9C201.0 156.6 203.0 150.5 204.8 145.2C206.6 139.9 208.4 133.6 209.8 130.1C211.2 126.6 212.4 125.2 213.2 124.0C214.0 122.8 214.1 122.6 214.8 122.9C215.5 123.2 216.3 123.7 217.3 126.0C218.3 128.3 219.4 131.6 220.7 136.8C222.0 141.9 223.5 149.9 224.9 156.9C226.3 163.9 227.5 170.8 229.0 178.6C230.5 186.4 232.6 196.5 234.1 203.7C235.6 211.0 237.0 217.1 238.2 222.1C239.5 227.1 240.5 230.9 241.6 233.8C242.7 236.7 243.6 239.1 244.6 239.4C245.6 239.7 246.4 238.7 247.4 235.5C248.4 232.3 249.7 226.3 250.8 220.5C251.9 214.7 253.0 207.0 254.1 200.4C255.2 193.8 256.4 186.2 257.5 181.0C258.6 175.8 259.8 171.9 260.8 169.4C261.8 166.9 262.4 165.7 263.4 166.1C264.4 166.5 265.3 168.2 266.7 172.0C268.1 175.8 270.0 183.7 271.7 188.7C273.4 193.7 274.9 197.6 276.7 202.1C278.5 206.6 280.6 211.5 282.6 215.5C284.6 219.5 286.4 222.7 288.5 226.3C290.6 229.9 292.7 233.6 295.1 237.2C297.5 240.8 300.8 245.4 302.7 248.1C304.6 250.8 305.3 251.4 306.7 253.4C308.1 255.4 309.6 257.8 311.0 260.0C312.4 262.2 313.8 265.1 315.1 266.8C316.4 268.5 317.7 270.4 318.8 270.4C319.9 270.4 320.9 269.3 321.8 266.8C322.7 264.2 323.7 258.9 324.3 255.1C324.9 251.3 324.5 249.1 325.2 243.9C325.9 238.7 327.6 229.1 328.6 223.8C329.6 218.5 330.3 214.9 331.1 212.1C331.9 209.3 332.6 208.1 333.3 207.1C334.0 206.1 334.4 206.1 335.3 206.3C336.2 206.4 337.1 207.3 338.6 208.0C340.1 208.7 342.6 210.6 344.5 210.5C346.4 210.4 348.2 209.4 350.3 207.4C352.4 205.4 355.1 201.8 357.0 198.7C358.9 195.6 360.5 191.9 362.0 188.7C363.5 185.5 364.9 181.8 366.2 179.5C367.5 177.2 368.3 176.5 369.6 175.0C370.8 173.5 372.6 172.5 373.7 170.3C374.8 168.1 375.3 166.6 376.3 161.9C377.3 157.2 378.5 149.4 379.6 141.9C380.7 134.4 381.9 123.8 382.9 116.8C383.9 109.8 384.7 103.7 385.5 100.1C386.3 96.5 386.9 95.7 387.5 95.4C388.1 95.1 388.2 95.4 388.8 98.4C389.4 101.4 390.3 107.6 391.3 113.5C392.3 119.4 393.6 127.6 394.7 133.5C395.8 139.3 396.9 144.6 398.0 148.6C399.1 152.7 400.2 155.6 401.3 157.8C402.4 159.9 403.6 161.2 404.7 161.5C405.8 161.8 407.0 160.6 408.0 159.9C409.0 159.2 410.1 157.2 410.9 157.3C411.8 157.4 412.3 158.8 413.1 160.3C413.9 161.8 414.7 164.3 415.6 166.1C416.5 167.9 417.8 168.8 418.6 171.2C419.4 173.6 420.0 176.1 420.6 180.4C421.2 184.7 421.7 191.0 422.3 197.1C422.8 203.2 423.4 210.4 423.9 217.1C424.5 223.8 425.2 233.4 425.6 237.2C426.0 241.0 425.8 235.3 426.3 240.0C426.8 244.7 428.0 256.7 428.8 265.1C429.6 273.5 430.5 282.1 431.3 290.2C432.1 298.3 433.0 306.6 433.8 313.6C434.5 320.6 435.2 327.8 435.8 332.0C436.4 336.2 436.9 339.0 437.5 338.7C438.1 338.4 438.6 335.6 439.2 330.3C439.8 325.0 440.4 315.8 441.0 306.9C441.6 298.0 442.4 285.2 443.0 276.8C443.6 268.4 444.3 262.2 444.7 256.7C445.2 251.2 445.3 248.1 445.7 243.9C446.1 239.7 446.7 234.3 447.3 231.4C447.9 228.5 448.6 227.2 449.5 226.7C450.4 226.2 451.4 228.2 452.4 228.4C453.4 228.6 454.5 228.5 455.7 228.0C456.9 227.5 458.3 225.5 459.4 225.5C460.5 225.5 461.4 227.2 462.4 228.0C463.5 228.8 464.6 230.8 465.7 230.5C466.8 230.2 468.1 227.7 469.1 226.3C470.1 224.9 471.2 222.0 471.9 222.2C472.6 222.4 472.8 224.9 473.5 227.4C474.2 229.9 475.0 234.1 475.9 237.2C476.8 240.3 478.1 244.1 478.9 246.2C479.7 248.3 479.9 247.1 480.7 250.0C481.5 252.9 483.0 258.9 483.7 263.4C484.4 267.9 484.4 272.3 484.8 276.8C485.2 281.3 485.6 283.8 486.0 290.2C486.4 296.6 486.7 305.5 487.0 315.3C487.3 325.0 487.7 336.2 487.9 348.7C488.2 361.2 488.3 380.7 488.5 390.5C488.7 400.3 488.8 407.6 489.0 407.6C489.2 407.6 489.3 398.9 489.5 390.5C489.7 382.1 489.8 367.1 490.0 357.1C490.2 347.1 490.4 337.0 490.7 330.3C491.0 323.6 491.4 320.5 491.9 316.9C492.4 313.3 493.2 311.9 493.7 308.6C494.2 305.3 494.5 302.2 494.9 296.9C495.3 291.6 495.7 283.5 496.1 276.8C496.5 270.1 496.9 262.2 497.1 256.7C497.3 251.2 497.2 250.5 497.5 243.9C497.8 237.3 498.3 224.3 498.7 217.1C499.1 209.9 499.3 204.6 499.7 200.7C500.1 196.9 500.4 195.4 500.9 194.0C501.4 192.6 502.0 192.7 502.7 192.1C503.5 191.5 504.5 191.6 505.4 190.3C506.3 189.0 507.2 186.0 507.9 184.4C508.6 182.8 509.0 181.5 509.4 180.7C509.9 179.9 510.2 179.2 510.6 179.6C511.0 180.0 511.4 180.1 511.9 182.9C512.5 185.7 513.1 191.6 513.9 196.3C514.7 201.0 516.1 205.9 516.9 211.1C517.7 216.3 518.2 223.0 518.8 227.5C519.4 232.0 519.8 235.7 520.3 237.9C520.8 240.1 521.1 241.3 521.5 240.6C521.9 239.9 522.4 236.2 522.8 233.5C523.2 230.8 523.6 226.7 524.0 224.5C524.4 222.3 524.9 220.6 525.3 220.4C525.7 220.1 526.0 222.0 526.5 223.0C527.0 224.0 527.5 226.0 528.3 226.3C529.0 226.6 530.1 225.5 531.0 224.8C531.9 224.1 532.9 224.1 533.7 222.3C534.5 220.5 535.0 217.5 535.7 214.1C536.4 210.8 537.1 206.4 537.7 202.2C538.3 198.0 538.9 192.0 539.5 188.8C540.1 185.6 540.6 183.5 541.1 183.2C541.6 183.0 541.9 184.6 542.4 187.3C542.9 190.0 543.5 195.5 544.1 199.2C544.7 202.9 545.3 207.1 545.9 209.7C546.5 212.3 547.1 213.9 547.6 214.9C548.1 215.9 548.5 216.0 549.1 215.6C549.7 215.2 550.5 214.3 551.1 212.6C551.7 210.9 552.2 207.1 552.6 205.2C553.0 203.4 553.3 201.5 553.7 201.5C554.1 201.5 554.4 201.6 554.8 205.2C555.2 208.8 555.5 217.1 556.0 223.0C556.5 228.9 557.0 235.4 557.5 240.9C558.0 246.4 558.5 252.1 558.9 255.8C559.3 259.5 559.8 261.7 560.1 263.2C560.4 264.7 560.6 265.5 560.9 264.7C561.3 264.0 561.7 262.2 562.2 258.7C562.7 255.2 563.4 249.8 564.0 243.9C564.6 237.9 565.3 230.4 565.9 223.0C566.5 215.6 566.9 207.6 567.4 199.2C567.9 190.8 568.4 181.4 568.9 172.5C569.4 163.6 570.0 152.9 570.4 145.7C570.9 138.5 571.2 132.7 571.6 129.3C572.0 125.9 572.2 125.0 572.6 125.2C573.0 125.5 573.3 127.6 573.8 130.8C574.2 134.0 574.8 139.7 575.3 144.2C575.8 148.7 576.3 154.4 576.8 157.6C577.3 160.8 577.8 163.0 578.3 163.5C578.8 164.0 579.3 162.8 579.8 160.6C580.3 158.4 580.9 152.4 581.3 150.2C581.7 148.0 582.0 146.7 582.4 147.2C582.8 147.7 583.2 149.4 583.6 153.1C584.0 156.8 584.4 163.8 584.8 169.5C585.2 175.2 585.5 181.8 586.0 187.3C586.5 192.7 587.0 198.0 587.5 202.2C588.0 206.4 588.5 209.4 589.0 212.6C589.5 215.8 590.0 220.3 590.5 221.3C591.0 222.3 591.4 219.4 591.7 218.6C592.1 217.8 592.4 216.7 592.6 216.3" fill="none" stroke="#ff0000" stroke-width="1.15" stroke-linejoin="round"/></svg>
<span class="t" style="left:667.9px;top:535.8px;font-size:13.33px;line-height:17px;color:#e0e0e0;letter-spacing:0.000px;will-change:transform;">70</span>
<span class="t" style="left:667.9px;top:618.6px;font-size:13.33px;line-height:17px;color:#e0e0e0;letter-spacing:0.000px;will-change:transform;">60</span>
<span class="t" style="left:667.9px;top:701.4px;font-size:13.33px;line-height:17px;color:#e0e0e0;letter-spacing:0.000px;will-change:transform;">50</span>
<span class="t" style="left:667.9px;top:784.1px;font-size:13.33px;line-height:17px;color:#e0e0e0;letter-spacing:0.000px;will-change:transform;">40</span>
<span class="t" style="left:667.9px;top:866.9px;font-size:13.33px;line-height:17px;color:#e0e0e0;letter-spacing:0.000px;will-change:transform;">30</span>
<span class="t" style="left:667.9px;top:949.6px;font-size:13.33px;line-height:17px;color:#e0e0e0;letter-spacing:0.000px;will-change:transform;">20</span>
<span class="t" style="left:680.1px;top:979.2px;font-size:13.33px;line-height:17px;color:#e0e0e0;letter-spacing:0.000px;will-change:transform;">20</span>
<span class="t" style="left:779.6px;top:979.2px;font-size:13.33px;line-height:17px;color:#e0e0e0;letter-spacing:0.000px;will-change:transform;">30</span>
<span class="t" style="left:850.2px;top:979.2px;font-size:13.33px;line-height:17px;color:#e0e0e0;letter-spacing:0.000px;will-change:transform;">40</span>
<span class="t" style="left:904.9px;top:979.2px;font-size:13.33px;line-height:17px;color:#e0e0e0;letter-spacing:0.000px;will-change:transform;">50</span>
<span class="t" style="left:949.7px;top:979.2px;font-size:13.33px;line-height:17px;color:#e0e0e0;letter-spacing:0.000px;will-change:transform;">60</span>
<span class="t" style="left:987.5px;top:979.2px;font-size:13.33px;line-height:17px;color:#e0e0e0;letter-spacing:0.000px;will-change:transform;">70</span>
<span class="t" style="left:1020.3px;top:979.2px;font-size:13.33px;line-height:17px;color:#e0e0e0;letter-spacing:0.000px;will-change:transform;">80</span>
<span class="t" style="left:1049.2px;top:979.2px;font-size:13.33px;line-height:17px;color:#e0e0e0;letter-spacing:0.000px;will-change:transform;">90</span>
<span class="t" style="left:1071.3px;top:979.2px;font-size:13.33px;line-height:17px;color:#e0e0e0;letter-spacing:0.000px;will-change:transform;">100</span>
<span class="t" style="left:1241.4px;top:979.2px;font-size:13.33px;line-height:17px;color:#e0e0e0;letter-spacing:0.000px;will-change:transform;">200</span>
<span class="t" style="left:921.5px;top:997.9px;font-size:14.67px;line-height:18px;color:#e0e0e0;letter-spacing:-0.045px;will-change:transform;">Frequency (Hz)</span>
<span class="t" style="left:655px;top:733px;font-size:14.67px;line-height:18px;color:#e0e0e0;will-change:transform;transform:translate(-50%,-50%) rotate(-90deg);">SPL (dB)</span>
<div class="b" style="left:696px;top:1036px;width:12px;height:12px;background:#fff;"></div>
<span class="t" style="left:713.0px;top:1033.1px;font-size:13.33px;line-height:17px;color:#0000ff;letter-spacing:-0.446px;will-change:transform;">AXIAL MODAL LINES</span>
<div class="b" style="left:860px;top:1036px;width:12px;height:12px;background:#fff;"></div>
<span class="t" style="left:876.0px;top:1033.1px;font-size:13.33px;line-height:17px;color:#ff0000;letter-spacing:-0.288px;will-change:transform;">TANGENTIAL MODAL LINES</span>
<div class="b" style="left:1070px;top:1036px;width:12px;height:12px;background:#fff;"></div>
<span class="t" style="left:1086.0px;top:1033.1px;font-size:13.33px;line-height:17px;color:#00ff00;letter-spacing:-0.284px;will-change:transform;">OBLIQUE MODAL LINES</span>
</div></div>
<div class="b" style="left:0;top:1040px;width:1919px;height:36px;background:linear-gradient(90deg,#1f3a42 0px,#1f3a42 48px,#1e1f20 400px,#1f2021 1030px,#1e2224 1150px,#1c2a34 1300px,#1b3144 1450px,#1c2d48 1600px,#1c2947 1750px,#1d2a49 1919px);"></div>
<div class="b" style="left:0px;top:1040px;width:48px;height:36px;background:#1d3940;"></div>
<svg class="b" style="left:16px;top:1052px" width="17" height="17"><path d="M0 2.4 L7 1.4 V8 H0 Z M8 1.25 L17 0 V8 H8 Z M0 9 H7 V15.6 L0 14.6 Z M8 9 H17 V17 L8 15.75 Z" fill="#ffffff"/></svg>
<div class="b" style="left:48px;top:1040px;width:343px;height:36px;background:#f2f2f2;"></div>
<svg class="b" style="left:58px;top:1049px" width="20" height="20"><circle cx="12" cy="7.5" r="5.6" fill="none" stroke="#222" stroke-width="1.4"/><path d="M8 11.7 L1.5 18.5" stroke="#222" stroke-width="1.5"/></svg>
<span class="t" style="left:88.5px;top:1051.3px;font-size:15px;line-height:19px;color:#454545;letter-spacing:-0.002px;">Чтобы начать поиск, введите здесь запрос</span>
<svg class="b" style="left:390px;top:1040px" width="700" height="36"><rect x="592" y="0" width="44" height="36" fill="#474747"/><rect x="636" y="0" width="1.5" height="36" fill="#343434"/><g fill="none" stroke="#f4f4f4" stroke-width="1.1"><rect x="18.600000000000023" y="15.5" width="10" height="7.5"/><path d="M18 14 V12.6 H29.30000000000001 V14 M18 24.6 V26 H29.30000000000001 V24.6 M32.39999999999998 12 V27"/></g><rect x="31.399999999999977" y="16.2" width="2.4" height="2.6" fill="#f4f4f4"/><rect x="66" y="9" width="22" height="15.6" fill="#3f7fe4"/><rect x="68.7" y="11.8" width="16.6" height="10" fill="none" stroke="#9cc0f8" stroke-width="0.9" stroke-dasharray="1.6 1.6"/><circle cx="68.7" cy="11.8" r="1.3" fill="none" stroke="#dce8fc" stroke-width="0.7"/><circle cx="85.3" cy="11.8" r="1.3" fill="none" stroke="#dce8fc" stroke-width="0.7"/><circle cx="68.7" cy="21.8" r="1.3" fill="none" stroke="#dce8fc" stroke-width="0.7"/><circle cx="85.3" cy="21.8" r="1.3" fill="none" stroke="#dce8fc" stroke-width="0.7"/><path d="M76 24.5 L86 22 M76 24.5 L85 28.5" stroke="#f0f0f0" stroke-width="1.3"/><ellipse cx="74" cy="21.6" rx="1.9" ry="2.3" fill="none" stroke="#f2c010" stroke-width="1.3"/><ellipse cx="73.8" cy="28.5" rx="2.2" ry="1.9" fill="none" stroke="#f2c010" stroke-width="1.3"/><g transform="translate(0,1.5)"><path d="M114.5 30 L116.2 23.5 A11 11 0 1 1 120.5 27.9 Z" fill="#1e1e1e" stroke="#25d366" stroke-width="2.2" stroke-linejoin="round"/><path d="M121.4 11.5 q-1.8 1.2 -1 4 q1.8 5 6.8 7.2 q2.6 0.8 3.8 -1.4 l-3 -2 l-1.6 1.2 q-2.2 -1 -3.4 -3.4 l1.2 -1.6 z" fill="#25d366"/></g><g transform="translate(0,2.2)"><rect x="163" y="6" width="22" height="22" fill="#f5b93c"/><rect x="163" y="6" width="22" height="9" fill="#f8cf70"/><path d="M163 28 L177 19 L185 22 V28 Z" fill="#fbe9c4"/><path d="M172 24 L180 19 L185 21 V26 L176 28 Z" fill="#fdf4e0"/><ellipse cx="170.5" cy="15.2" rx="4" ry="5.6" fill="#f9dca0" stroke="#e8780c" stroke-width="3"/><circle cx="182" cy="15" r="3" fill="#fff4e0" stroke="#e8a040" stroke-width="0.8"/><path d="M181 14 L182 15.4 L183.6 15" stroke="#e05a10" stroke-width="0.8" fill="none"/></g><g transform="translate(0,2)"><circle cx="223.79999999999995" cy="18" r="11" fill="#2a9fdc"/><path d="M216.99999999999994 17.8 L229.39999999999995 12.8 L227.19999999999996 23.6 L223.49999999999994 20.8 L221.59999999999997 22.8 L221.19999999999996 19.6 Z" fill="#ffffff"/><path d="M221.19999999999996 19.6 L227.19999999999996 14.8 L223.49999999999994 20.800 L221.59999999999997 22.8Z" fill="#d0e2f2"/></g><g transform="translate(0,2)"><circle cx="273" cy="18" r="12" fill="#ffffff"/><path d="M266.7 12.3 L272.8 18.6" stroke="#ff6a1e" stroke-width="3.1" stroke-linecap="round"/><path d="M279.3 12.6 L272.8 18.6" stroke="#ff4a6e" stroke-width="3.1" stroke-linecap="round"/><path d="M272.8 18.600 V26.5" stroke="#ff3a24" stroke-width="3.1" stroke-linecap="round"/><circle cx="279.2" cy="12.600" r="1.5" fill="#f858d8"/></g><path d="M310 24 L315.8 20.900 V26.6 H319.4 V18.3 L326.2 15.2 V30.8 H319.4 V30.8 H310 Z M328.3 13.600 L334 9.5 V30.800 H328.3 Z" fill="#4263e6"/><rect x="359" y="8.2" width="24" height="23.8" fill="#3c0d8c"/><text x="371" y="17.5" font-family="Liberation Sans" font-size="9" font-weight="700" fill="#d4d4d4" text-anchor="middle">REW</text><path d="M360.5 30.5 L362 24 L363.3 16 L364.8 24 L366.5 27 L369 28.5 L370.5 22 L371.5 18.500 L372.5 28 L374.5 26.500 L376 28 L377.5 26 L379 27.5 L381.5 26.500 V30.5 Z" fill="#22b04a"/><path d="M361.5 30.5 L362.5 26 L363.3 21 L364.5 26 L366.5 28.800 L369.5 29.5 L371.3 25 L372.5 29.5 L375 28 L377.5 28 L380.5 28.5 V30.500 Z" fill="#e8e020"/><path d="M362.3 30.500 L363.3 24 L364.3 29 L365.5 30.5 Z M370.8 30.5 L371.4 27 L372 30.5 Z" fill="#f03418"/><path d="M409 12 q0 -1.500 1.500 -1.500 h6.5 l1.800 2 h10.700 q1.5 0 1.5 1.5 v3 h-22 z" fill="#e9a81c"/><rect x="409" y="14" width="22" height="16.600" rx="1.200" fill="#fcd252"/><path d="M413.2 30.600 v-7.800 h13.600 v7.800 h-3.400 v-4.300 h-6.800 v4.300 z" fill="#3e93e6"/><rect x="413.2" y="22.800" width="13.600" height="1.600" fill="#2f7fd0"/><rect x="457" y="8" width="24" height="24" fill="#000"/><g stroke="#fff" stroke-width="1.100"><path d="M469 8.5 V31.5 M457.5 20 H480.5"/><path d="M460 11 L478 29 M478 11 L460 29" stroke-width="1.300"/></g><circle cx="469" cy="20" r="2.600" fill="#fff"/><g transform="translate(0,2)"><circle cx="518" cy="18" r="11.800" fill="#ea4335"/><path d="M518 18 L507.8 12.100 A11.800 11.800 0 0 0 516.5 29.700 L522.5 20.600 Z" fill="#34a853"/><path d="M518 18 L516.5 29.700 A11.800 11.800 0 0 0 528.7 13 L518 13Z" fill="#fbbc05"/><path d="M507.8 12.100 A11.800 11.800 0 0 1 528.7 13 L518 13 L513.5 15.500 Z" fill="#ea4335"/><circle cx="518" cy="18" r="5.400" fill="#ffffff"/><circle cx="518" cy="18" r="4.300" fill="#4285f4"/></g><rect x="555" y="8" width="24" height="24" fill="#e8eef6"/><g transform="translate(567,20)"><path d="M-7.500 -5.500 L0 -9.500 L8 -5.500 V-2 L0 -6 L-3.500 -4.200 L8 1.500 V6.500 L0 10.500 L-7.500 6.500 V3 L0 7 L4.500 4.700 L-7.500 -1.300 Z" fill="#1b6aae"/><path d="M-3.500 -1.800 L4.500 2.200 V3.400 L-3.500 -0.600 Z" fill="#e8eef6"/><path d="M-0.500 -3.200 L5.500 -0.200 V1 L-0.500 -2 Z" fill="#e8eef6"/></g><rect x="604" y="8" width="24" height="24" fill="#f6f6f6"/><path d="M613 8 H628 V32 H617 L618 20 Z" fill="#165a18"/><path d="M619 8 H628 V11 L622 17 Z" fill="#5ab424"/><path d="M610 12 L619 9 L617 18 L612 19 Z" fill="#1b6aae"/><path d="M612 19 L620 14 L619 32 H613 Z" fill="#0c0c0c"/><path d="M607.5 21 L610 18 L613 19.500 L611 24 Z" fill="#f08a18"/><path d="M607 25 L614 21 L616 32 H609 Z" fill="#d8143c"/><path d="M612 32 L615 24 L617.5 32 Z" fill="#8c1030"/></svg>
<svg class="b" style="left:1695px;top:1040px" width="224" height="36"><path d="M6.5 22.8 L12.4 16.9 L18.3 22.8" fill="none" stroke="#f0f0f0" stroke-width="1.3"/><g fill="none" stroke="#f0f0f0" stroke-width="1.1"><rect x="31.40000000000009" y="15.200000000000045" width="12.2" height="8.3"/><path d="M30.8 19.5 V26.40000000000009 M29.6 26.4 H40.59999999999991 M36.5 23.5 V26.40000000000009"/><rect x="28.59999999999991" y="15.200000000000045" width="4.2" height="4.2" fill="#1c2947"/><path d="M29.8 17.3 H31.799999999999955"/></g><g fill="none" stroke="#f0f0f0" stroke-width="1.1"><path d="M52.4 17.8 H54.59999999999991 L58.0 14.9 V26 L54.6 23.0 H52.40000000000009 Z"/><path d="M60.0 18.4 q1.6 2 0 4"/><path d="M62.6 16.4 q3 4 0 8" stroke="#a8b0bc"/><path d="M65.4 14.0 q4.4 6.400 0 12.800" stroke="#6c7888"/></g><path d="M184.4 12.3 H200.29999999999995 V23 H193 L190.5 25.6 V23 H184.4000000000001 Z" fill="#f4f4f4"/><path d="M187.2 15.5 H197.5999999999999 M187.2 18.0 H197.5999999999999 M187.2 20.5 H197.5999999999999" stroke="#1c2947" stroke-width="1"/><circle cx="199.70000000000005" cy="27.200000000000045" r="7.300" fill="#3a3c46" stroke="#1c2947" stroke-width="1"/><rect x="220" y="0" width="1" height="36" fill="#6a7482"/></svg>
<span class="t" style="left:1891.7px;top:1060.6px;font-size:11px;line-height:14px;color:#ffffff;font-weight:700;letter-spacing:0.000px;">6</span>
<span class="t" style="left:1774.3px;top:1052.7px;font-size:12px;line-height:15px;color:#f4f4f4;letter-spacing:-1.065px;">РУС</span>
<span class="t" style="left:1814.2px;top:1043.7px;font-size:12px;line-height:15px;color:#f4f4f4;letter-spacing:-0.300px;">3:11 PM</span>
<span class="t" style="left:1806.5px;top:1061.7px;font-size:12px;line-height:15px;color:#f4f4f4;letter-spacing:-0.185px;">11/18/2025</span>
</body></html>
